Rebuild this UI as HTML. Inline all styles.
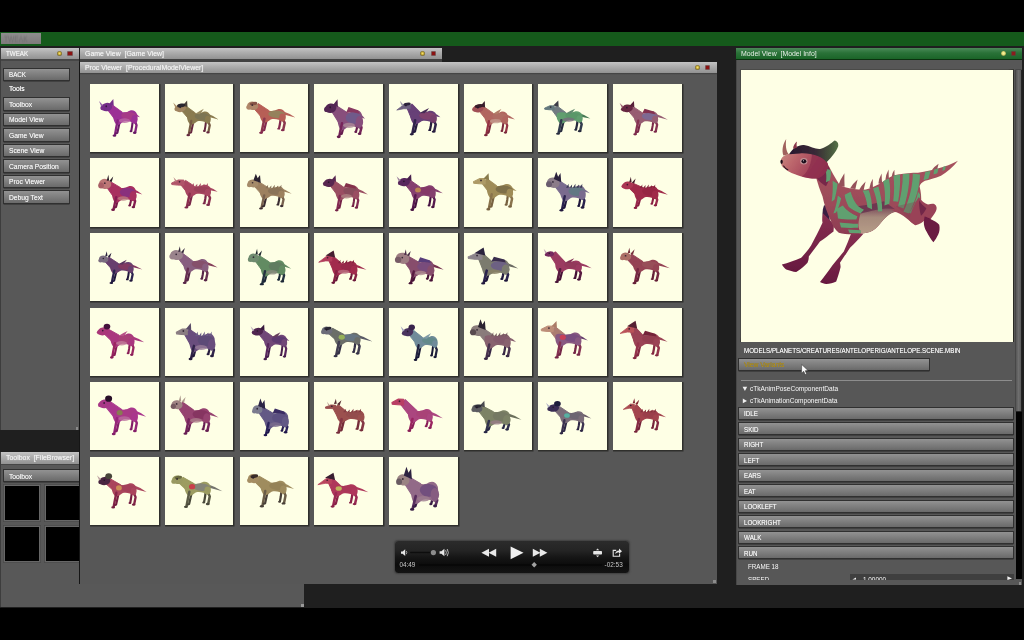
<!DOCTYPE html><html><head><meta charset="utf-8"><title>TWEAK</title><style>
html,body{margin:0;padding:0;background:#000;}
body{width:1024px;height:640px;overflow:hidden;position:relative;filter:blur(0.4px);font-family:"Liberation Sans",sans-serif;font-size:8px;color:#f8f8f8;}
div{position:absolute;box-sizing:border-box;}
svg{position:absolute;overflow:visible;}
.t{white-space:nowrap;line-height:10px;filter:blur(0.35px);transform-origin:0 0;}
#green{left:0;top:32px;width:1024px;height:13.5px;background:#155a1b;}
#work{left:0;top:45.5px;width:1024px;height:562px;background:#1f1f1f;}
#tab{left:1px;top:33px;width:40px;height:11px;background:linear-gradient(#8e8e8e,#7e7a7a);}
#tab .t{left:3px;top:1px;color:#6f6f6f;font-size:8.5px;filter:blur(0.8px);}
.hd{height:11px;background:linear-gradient(#c4c4c4,#aeaeae 40%,#929292);}
.hd .t{left:4.5px;top:0.5px;color:#f0f0f0;font-size:8px;text-shadow:0 0 1px #fffc;}
.hdg{height:11.5px;background:linear-gradient(#4b8a58,#2a7238 45%,#1b6428);border-bottom:1px solid #0b300f;}
.hdg .t{left:4.5px;top:0.5px;color:#e8f0e8;font-size:8px;}
.pb{background:#585858;}
.dot{width:5px;height:5px;border-radius:50%;background:radial-gradient(circle at 50% 48%,#f2e27a 0,#d4b83c 30%,#8a7830 58%,#5a5436 80%,#6a6a5a 100%);}
.dotg{width:4.6px;height:4.6px;border-radius:50%;background:radial-gradient(circle at 50% 45%,#fbf6a8 0,#e6e078 40%,#6a7a3a 80%,#2a5a2a 100%);}
.red{width:3.3px;height:3.5px;background:#8c1212;box-shadow:0 0 0 0.7px #6a3434;}
.btn{height:11.6px;background:linear-gradient(#929292,#7e7e7e 50%,#6a6a6a);box-shadow:0 0 0 1px #303030, 0 1.1px 0.6px 0.4px #2b2b2b;}
.btn .t{left:4.5px;top:1.8px;color:#f3f3f3;font-size:8px;text-shadow:0 0 0.6px #fffa;}
.cell{width:68.6px;height:68.4px;background:#feffe5;box-shadow:0.8px 0.8px 0 0.7px #2f2f2c;overflow:hidden;}
.blk{background:#000;box-shadow:0 0 0 1.2px #676767, 0 0 0 2px #4a4a4a;}
</style></head><body>
<svg width="0" height="0" style="left:0;top:0"><defs><filter id="sb" x="-20%" y="-20%" width="140%" height="140%"><feGaussianBlur stdDeviation="0.5"/><feColorMatrix type="saturate" values="0.86"/></filter><filter id="bb" x="-10%" y="-10%" width="120%" height="120%"><feGaussianBlur stdDeviation="0.72"/><feColorMatrix type="saturate" values="0.9"/></filter></defs></svg>
<div id="work"></div>
<div id="green"></div>
<div id="tab"><div class="t" style="transform:scaleX(0.78);">TWEAK</div></div>
<div class="pb" style="left:0;top:48px;width:78.6px;height:382px;border-left:1px solid #3d3d3d;background:#585858"></div>
<div class="hd" style="left:1px;top:48px;width:77.6px;"><div class="t" style="transform:scaleX(0.78);left:4.5px">TWEAK</div></div>
<div style="left:1px;top:59px;width:77.6px;height:1.6px;background:#464646"></div>
<div class="dot" style="left:57px;top:51.1px"></div><div class="red" style="left:68.3px;top:51.9px"></div>
<div style="left:75.6px;top:427px;width:2.6px;height:2.6px;background:#8a8a8a"></div>
<div class="btn" style="left:4px;top:68.7px;width:65.4px"><div class="t" style="transform:scaleX(0.78);">BACK</div></div>
<div class="btn" style="left:4px;top:98.0px;width:65.4px"><div class="t" style="transform:scaleX(0.84);">Toolbox</div></div>
<div class="btn" style="left:4px;top:113.5px;width:65.4px"><div class="t" style="transform:scaleX(0.84);">Model View</div></div>
<div class="btn" style="left:4px;top:129.0px;width:65.4px"><div class="t" style="transform:scaleX(0.84);">Game View</div></div>
<div class="btn" style="left:4px;top:144.5px;width:65.4px"><div class="t" style="transform:scaleX(0.84);">Scene View</div></div>
<div class="btn" style="left:4px;top:160.0px;width:65.4px"><div class="t" style="transform:scaleX(0.84);">Camera Position</div></div>
<div class="btn" style="left:4px;top:175.5px;width:65.4px"><div class="t" style="transform:scaleX(0.84);">Proc Viewer</div></div>
<div class="btn" style="left:4px;top:191.0px;width:65.4px"><div class="t" style="transform:scaleX(0.84);">Debug Text</div></div>
<div class="t" style="transform:scaleX(0.84);left:8.6px;top:84.2px;font-size:8px;color:#fbfbfb;text-shadow:0 0 0.7px #fffc">Tools</div>
<div class="pb" style="left:0;top:452px;width:304px;height:155.4px;border-left:1px solid #3d3d3d;"></div>
<div class="hd" style="left:1px;top:452.3px;width:303px;height:11.4px"><div class="t" style="transform:scaleX(0.865);left:4.5px">Toolbox&nbsp; [FileBrowser]</div></div>
<div style="left:1px;top:463.7px;width:303px;height:1.5px;background:#464646"></div>
<div style="left:301.2px;top:604px;width:2.6px;height:2.6px;background:#9a9a9a"></div>
<div class="btn" style="left:4px;top:469.8px;width:200px;height:11.2px"><div class="t" style="transform:scaleX(0.84);">Toolbox</div></div>
<div class="blk" style="left:5.2px;top:486.4px;width:34.2px;height:34px"></div>
<div class="blk" style="left:5.2px;top:527px;width:34.2px;height:34px"></div>
<div class="blk" style="left:46.2px;top:486.4px;width:34.2px;height:34px"></div>
<div class="blk" style="left:46.2px;top:527px;width:34.2px;height:34px"></div>
<div style="left:80px;top:48px;width:362px;height:16px;background:#424242"></div>
<div class="hd" style="left:80px;top:48px;width:362px;"><div class="t" style="transform:scaleX(0.865);">Game View&nbsp; [Game View]</div></div>
<div class="dot" style="left:420px;top:51.1px"></div><div class="red" style="left:431.6px;top:51.9px"></div>
<div style="left:78.8px;top:61.5px;width:638.4px;height:522.6px;background:#151515"></div>
<div style="left:80px;top:62px;width:636.6px;height:521.6px;background:#575757"></div>
<div class="hd" style="left:80px;top:62px;width:636.6px;"><div class="t" style="transform:scaleX(0.865);">Proc Viewer&nbsp; [ProceduralModelViewer]</div></div>
<div style="left:80px;top:73px;width:636.6px;height:2px;background:linear-gradient(#3f3f3f,#595959)"></div>
<div class="dot" style="left:694.8px;top:64.9px"></div><div class="red" style="left:706.1px;top:65.6px"></div>
<div style="left:713.4px;top:580.2px;width:2.8px;height:2.8px;background:#8c8c8c"></div>
<div class="cell" style="left:90.2px;top:83.7px"><svg width="68.6" height="68.4" viewBox="0 0 68.6 68.4" style="left:0;top:0"><g transform="matrix(0.9322 0 0 1.0023 1.713 0.008) translate(0 0)" filter="url(#sb)"><path d="M45,28.22 Q49.4,30.1 51.7,33.1 Q48.9,32.42 45,31.64 Z" fill="#a3239b"/><polyline points="30.2,37 28.8,43.25 27.6,48.5" fill="none" stroke="#6a0a68" stroke-width="2.25" stroke-linecap="round" stroke-linejoin="round"/><polyline points="44,37 43.3,42.25 42.5,46.5" fill="none" stroke="#6a0a68" stroke-width="2.25" stroke-linecap="round" stroke-linejoin="round"/><path d="M17,25.6 L21.6,20.6 L32.5,28 L29,36 L23.8,33.9 Z" fill="#a3239b" stroke="#a3239b" stroke-width="1" stroke-linejoin="round"/><path d="M23.5,28.4 C27.5,25.9 33.1,29.4 38.1,27.9 C42.1,25.4 46.7,25.4 48.7,30.4 C49.5,33.9 48.7,37.7 46.2,39.7 C42.7,37.7 38.1,36.2 34.1,37.5 C31.1,39.7 28.5,41.7 26.5,40.7 C23,36.7 22.5,31.9 23.5,28.4 Z" fill="#a3239b"/><ellipse cx="40.1" cy="31.86" rx="8.5" ry="4.01" transform="rotate(4 40.1 31.86)" fill="#b0308a" opacity="0.85"/><ellipse cx="35.1" cy="36.5" rx="6" ry="2.3" fill="#c060a8" opacity="0.8"/><polyline points="27.8,36.5 26.2,44.25 25,50.7" fill="none" stroke="#8a1284" stroke-width="2.5" stroke-linecap="round" stroke-linejoin="round"/><ellipse cx="24.4" cy="51.5" rx="2.0" ry="1.2" fill="#6a0a68"/><polyline points="45.7,35.5 48.1,41.05 46.7,47.8" fill="none" stroke="#8a1284" stroke-width="2.5" stroke-linecap="round" stroke-linejoin="round"/><ellipse cx="46.1" cy="48.7" rx="1.9" ry="1.2" fill="#6a0a68"/><ellipse cx="26.4" cy="49.1" rx="1.5" ry="1.0" fill="#6a0a68"/><ellipse cx="42.1" cy="47.1" rx="1.5" ry="1.0" fill="#6a0a68"/><ellipse cx="45.9" cy="35.2" rx="3.29" ry="4.24" fill="#a3239b"/><ellipse cx="16" cy="23" rx="6" ry="4.2" transform="rotate(-8 16 23)" fill="#7a2590"/><ellipse cx="11.8" cy="24" rx="2.6" ry="2.3" fill="#7a2590"/><path d="M18.2,20.4 L23.2,15 L23.6,21.8 Z" fill="#7a2590"/><path d="M10.2,22.4 L7.8,17 L12.2,21.2 Z" fill="#9a60b0"/><circle cx="15.6" cy="22.2" r="0.9" fill="#221428" opacity="0.8"/></g></svg></div>
<div class="cell" style="left:164.9px;top:83.7px"><svg width="68.6" height="68.4" viewBox="0 0 68.6 68.4" style="left:0;top:0"><g transform="matrix(0.9088 0 0 0.9483 1.043 2.299) translate(0 0)" filter="url(#sb)"><path d="M45,28.37 Q52.1,30.85 57.7,35.05 Q51.6,33.53 45,31.79 Z" fill="#8c7a44"/><polyline points="30.2,37 28.8,43.25 27.6,48.5" fill="none" stroke="#6a2440" stroke-width="2.25" stroke-linecap="round" stroke-linejoin="round"/><polyline points="44,37 43.3,42.25 42.5,46.5" fill="none" stroke="#6a2440" stroke-width="2.25" stroke-linecap="round" stroke-linejoin="round"/><path d="M17,25.6 L21.6,20.6 L32.5,28.3 L29,36 L24.28,33.7 Z" fill="#8c7a44" stroke="#8c7a44" stroke-width="1" stroke-linejoin="round"/><path d="M23.5,28.7 C27.5,26.2 33.1,29.7 38.1,28.2 C42.1,25.7 46.7,25.7 48.7,30.7 C49.5,34.2 48.7,37.35 46.2,39.35 C42.7,37.35 38.1,35.85 34.1,37.15 C31.1,39.35 28.5,41.35 26.5,40.35 C23,36.35 22.5,32.2 23.5,28.7 Z" fill="#8c7a44"/><ellipse cx="40.1" cy="31.88" rx="8.5" ry="3.79" transform="rotate(4 40.1 31.88)" fill="#7a7450" opacity="0.85"/><path d="M32.1,29 L37.1,26 L41.6,23.8 L39.1,27.4 L37.1,29.4 Z" fill="#9a8a58"/><polyline points="27.8,36.5 26.2,44.25 25,50.7" fill="none" stroke="#7a5a3c" stroke-width="2.5" stroke-linecap="round" stroke-linejoin="round"/><ellipse cx="24.4" cy="51.5" rx="2.0" ry="1.2" fill="#6a2440"/><polyline points="45.7,35.5 48.1,41.05 46.7,47.8" fill="none" stroke="#7a5a3c" stroke-width="2.5" stroke-linecap="round" stroke-linejoin="round"/><ellipse cx="46.1" cy="48.7" rx="1.9" ry="1.2" fill="#6a2440"/><ellipse cx="26.4" cy="49.1" rx="1.5" ry="1.0" fill="#6a2440"/><ellipse cx="42.1" cy="47.1" rx="1.5" ry="1.0" fill="#6a2440"/><ellipse cx="45.9" cy="35.2" rx="3.15" ry="4.02" fill="#8c7a44"/><ellipse cx="16" cy="23" rx="6" ry="4.2" transform="rotate(-8 16 23)" fill="#a58356"/><ellipse cx="11.8" cy="24" rx="2.6" ry="2.3" fill="#a58356"/><path d="M18.2,20.4 L23.2,15 L23.6,21.8 Z" fill="#4a4038"/><ellipse cx="17.2" cy="20.4" rx="4.6" ry="2" transform="rotate(-10 16 23)" fill="#2c2630"/><path d="M10.2,22.4 L7.8,17 L12.2,21.2 Z" fill="#b09060"/><circle cx="15.6" cy="22.2" r="0.9" fill="#221428" opacity="0.8"/></g></svg></div>
<div class="cell" style="left:239.6px;top:83.7px"><svg width="68.6" height="68.4" viewBox="0 0 68.6 68.4" style="left:0;top:0"><g transform="matrix(0.9985 0 0 0.9459 -1.321 0.084) translate(-2 0)" filter="url(#sb)"><path d="M45,28.3 Q52.55,30.88 58.7,35.28 Q52.05,33.61 45,31.71 Z" fill="#bf5a50"/><polyline points="30.2,37 28.8,43.25 27.6,48.5" fill="none" stroke="#8a2450" stroke-width="2.25" stroke-linecap="round" stroke-linejoin="round"/><polyline points="44,37 43.3,42.25 42.5,46.5" fill="none" stroke="#8a2450" stroke-width="2.25" stroke-linecap="round" stroke-linejoin="round"/><path d="M17,25.6 L21.6,20.6 L32.5,28.15 L29,36 L23.8,33.8 Z" fill="#bf5a50" stroke="#bf5a50" stroke-width="1" stroke-linejoin="round"/><path d="M23.5,28.55 C27.5,26.05 33.1,29.55 38.1,28.05 C42.1,25.55 46.7,25.55 48.7,30.55 C49.5,34.05 48.7,37.52 46.2,39.52 C42.7,37.52 38.1,36.02 34.1,37.32 C31.1,39.52 28.5,41.52 26.5,40.52 C23,36.52 22.5,32.05 23.5,28.55 Z" fill="#bf5a50"/><ellipse cx="40.1" cy="31.87" rx="8.5" ry="3.9" transform="rotate(4 40.1 31.87)" fill="#8f8852" opacity="0.85"/><polyline points="27.8,36.5 26.2,44.25 25,50.7" fill="none" stroke="#93304e" stroke-width="2.5" stroke-linecap="round" stroke-linejoin="round"/><ellipse cx="24.4" cy="51.5" rx="2.0" ry="1.2" fill="#8a2450"/><polyline points="45.7,35.5 48.1,41.05 46.7,47.8" fill="none" stroke="#93304e" stroke-width="2.5" stroke-linecap="round" stroke-linejoin="round"/><ellipse cx="46.1" cy="48.7" rx="1.9" ry="1.2" fill="#8a2450"/><ellipse cx="26.4" cy="49.1" rx="1.5" ry="1.0" fill="#8a2450"/><ellipse cx="42.1" cy="47.1" rx="1.5" ry="1.0" fill="#8a2450"/><ellipse cx="45.9" cy="35.2" rx="3.22" ry="4.13" fill="#bf5a50"/><ellipse cx="16" cy="23" rx="5.61" ry="4.42" transform="rotate(10 16 23)" fill="#b58562"/><ellipse cx="12.26" cy="24.6" rx="2.63" ry="2.55" fill="#b58562"/><ellipse cx="17.2" cy="20.79" rx="3.91" ry="1.7" transform="rotate(-10 16 23)" fill="#8a5040"/><circle cx="15.6" cy="22.2" r="0.9" fill="#221428" opacity="0.8"/></g></svg></div>
<div class="cell" style="left:314.3px;top:83.7px"><svg width="68.6" height="68.4" viewBox="0 0 68.6 68.4" style="left:0;top:0"><g transform="matrix(0.9626 0 0 1.1217 1.216 -1.525) translate(0 0)" filter="url(#sb)"><path d="M45,27.47 Q49.4,29.35 51.7,32.35 Q48.9,31.67 45,30.89 Z" fill="#8d4b80"/><polyline points="30.2,37 28.8,41.75 27.6,45.5" fill="none" stroke="#6a1450" stroke-width="2.25" stroke-linecap="round" stroke-linejoin="round"/><polyline points="44,37 43.3,40.75 42.5,43.5" fill="none" stroke="#6a1450" stroke-width="2.25" stroke-linecap="round" stroke-linejoin="round"/><path d="M17,25.6 L21.6,20.6 L32.5,26.5 L29,36 L23.8,34.9 Z" fill="#8d4b80" stroke="#8d4b80" stroke-width="1" stroke-linejoin="round"/><path d="M23.5,26.9 C27.5,24.4 33.1,27.9 38.1,26.4 C42.1,23.9 46.7,23.9 48.7,28.9 C49.5,32.4 48.7,39.45 46.2,41.45 C42.7,39.45 38.1,37.95 34.1,39.25 C31.1,41.45 28.5,43.45 26.5,42.45 C23,38.45 22.5,30.4 23.5,26.9 Z" fill="#8d4b80"/><ellipse cx="40.1" cy="31.72" rx="8.5" ry="5.12" transform="rotate(4 40.1 31.72)" fill="#6d5c92" opacity="0.85"/><ellipse cx="35.1" cy="38.25" rx="6" ry="2.3" fill="#b08a98" opacity="0.8"/><path d="M32.1,26.9 L34.6,21.8 L44.6,24.8 L46.1,27.8 L39.1,26.6 Z" fill="#8d3162"/><polyline points="27.8,36.5 26.2,42.75 25,47.7" fill="none" stroke="#7c1c5c" stroke-width="2.5" stroke-linecap="round" stroke-linejoin="round"/><ellipse cx="24.4" cy="48.5" rx="2.0" ry="1.2" fill="#6a1450"/><polyline points="45.7,35.5 48.1,40.15 46.7,44.8" fill="none" stroke="#7c1c5c" stroke-width="2.5" stroke-linecap="round" stroke-linejoin="round"/><ellipse cx="46.1" cy="45.7" rx="1.9" ry="1.2" fill="#6a1450"/><ellipse cx="26.4" cy="46.1" rx="1.5" ry="1.0" fill="#6a1450"/><ellipse cx="42.1" cy="44.1" rx="1.5" ry="1.0" fill="#6a1450"/><ellipse cx="45.9" cy="35.2" rx="3.91" ry="5.22" fill="#8d4b80"/><ellipse cx="16" cy="23" rx="6" ry="4.2" transform="rotate(-8 16 23)" fill="#572258"/><ellipse cx="11.8" cy="24" rx="2.6" ry="2.3" fill="#572258"/><path d="M18.2,20.4 L23.2,15 L23.6,21.8 Z" fill="#572258"/><circle cx="15.6" cy="22.2" r="0.9" fill="#221428" opacity="0.8"/></g></svg></div>
<div class="cell" style="left:389.0px;top:83.7px"><svg width="68.6" height="68.4" viewBox="0 0 68.6 68.4" style="left:0;top:0"><g transform="matrix(1.0121 0 0 0.9343 -1.976 2.164) translate(0 0)" filter="url(#sb)"><path d="M45,28.22 Q49.85,30.2 52.7,33.4 Q49.35,32.58 45,31.64 Z" fill="#6a3c7c"/><polyline points="30.2,37 28.8,43.25 27.6,48.5" fill="none" stroke="#251a40" stroke-width="2.25" stroke-linecap="round" stroke-linejoin="round"/><polyline points="44,37 43.3,42.25 42.5,46.5" fill="none" stroke="#251a40" stroke-width="2.25" stroke-linecap="round" stroke-linejoin="round"/><path d="M20,24.1 L24.6,19.1 L32.5,28 L29,36 L23.8,33.9 Z" fill="#6a3c7c" stroke="#6a3c7c" stroke-width="1" stroke-linejoin="round"/><path d="M23.5,28.4 C27.5,25.9 33.1,29.4 38.1,27.9 C42.1,25.4 46.7,25.4 48.7,30.4 C49.5,33.9 48.7,37.7 46.2,39.7 C42.7,37.7 38.1,36.2 34.1,37.5 C31.1,39.7 28.5,41.7 26.5,40.7 C23,36.7 22.5,31.9 23.5,28.4 Z" fill="#6a3c7c"/><ellipse cx="40.1" cy="31.86" rx="8.5" ry="4.01" transform="rotate(4 40.1 31.86)" fill="#8a3c6e" opacity="0.85"/><path d="M32.1,28.7 L37.1,25.7 L41.6,23.5 L39.1,27.1 L37.1,29.1 Z" fill="#4a2a5a"/><polyline points="27.8,36.5 26.2,44.25 25,50.7" fill="none" stroke="#33224f" stroke-width="2.5" stroke-linecap="round" stroke-linejoin="round"/><ellipse cx="24.4" cy="51.5" rx="2.0" ry="1.2" fill="#251a40"/><polyline points="45.7,35.5 48.1,41.05 46.7,47.8" fill="none" stroke="#33224f" stroke-width="2.5" stroke-linecap="round" stroke-linejoin="round"/><ellipse cx="46.1" cy="48.7" rx="1.9" ry="1.2" fill="#251a40"/><ellipse cx="26.4" cy="49.1" rx="1.5" ry="1.0" fill="#251a40"/><ellipse cx="42.1" cy="47.1" rx="1.5" ry="1.0" fill="#251a40"/><ellipse cx="45.9" cy="35.2" rx="3.29" ry="4.24" fill="#7a3a70"/><path d="M22.9,19 L18.22,18.54 L9.64,25.56 L16.66,24.15 L22.9,24.31 Z" fill="#6e5e84" stroke="#6e5e84" stroke-width="0.8" stroke-linejoin="round"/><ellipse cx="20.2" cy="19.47" rx="3.59" ry="1.56" transform="rotate(-10 19 21.5)" fill="#2e2440"/><path d="M14.48,20.9 L12.6,15.5 L16.04,19.7 Z" fill="#9a94aa"/><circle cx="18.6" cy="20.7" r="0.9" fill="#221428" opacity="0.8"/></g></svg></div>
<div class="cell" style="left:463.6px;top:83.7px"><svg width="68.6" height="68.4" viewBox="0 0 68.6 68.4" style="left:0;top:0"><g transform="matrix(0.9033 0 0 0.9329 -0.665 2.188) translate(0.5 1)" filter="url(#sb)"><path d="M45,28.22 Q51.65,30.6 56.7,34.6 Q51.15,33.22 45,31.64 Z" fill="#b8625a"/><polyline points="30.2,37 28.8,43.25 27.6,48.5" fill="none" stroke="#80203a" stroke-width="2.25" stroke-linecap="round" stroke-linejoin="round"/><polyline points="44,37 43.3,42.25 42.5,46.5" fill="none" stroke="#80203a" stroke-width="2.25" stroke-linecap="round" stroke-linejoin="round"/><path d="M17,25.6 L21.6,20.6 L32.5,28 L29,36 L23.8,33.9 Z" fill="#b8625a" stroke="#b8625a" stroke-width="1" stroke-linejoin="round"/><path d="M23.5,28.4 C27.5,25.9 33.1,29.4 38.1,27.9 C42.1,25.4 46.7,25.4 48.7,30.4 C49.5,33.9 48.7,37.7 46.2,39.7 C42.7,37.7 38.1,36.2 34.1,37.5 C31.1,39.7 28.5,41.7 26.5,40.7 C23,36.7 22.5,31.9 23.5,28.4 Z" fill="#b8625a"/><ellipse cx="40.1" cy="31.86" rx="8.5" ry="4.01" transform="rotate(4 40.1 31.86)" fill="#b46c5e" opacity="0.85"/><ellipse cx="35.1" cy="36.5" rx="6" ry="2.3" fill="#c8988a" opacity="0.8"/><path d="M32.1,28.7 L37.1,25.7 L41.6,23.5 L39.1,27.1 L37.1,29.1 Z" fill="#b87a60"/><polyline points="27.8,36.5 26.2,44.25 25,50.7" fill="none" stroke="#9c2c42" stroke-width="2.5" stroke-linecap="round" stroke-linejoin="round"/><ellipse cx="24.4" cy="51.5" rx="2.0" ry="1.2" fill="#80203a"/><polyline points="45.7,35.5 48.1,41.05 46.7,47.8" fill="none" stroke="#9c2c42" stroke-width="2.5" stroke-linecap="round" stroke-linejoin="round"/><ellipse cx="46.1" cy="48.7" rx="1.9" ry="1.2" fill="#80203a"/><ellipse cx="26.4" cy="49.1" rx="1.5" ry="1.0" fill="#80203a"/><ellipse cx="42.1" cy="47.1" rx="1.5" ry="1.0" fill="#80203a"/><ellipse cx="45.9" cy="35.2" rx="3.29" ry="4.24" fill="#b8625a"/><ellipse cx="16" cy="23" rx="6" ry="4.2" transform="rotate(-8 16 23)" fill="#a84c52"/><ellipse cx="11.8" cy="24" rx="2.6" ry="2.3" fill="#a84c52"/><path d="M18.2,20.4 L23.2,15 L23.6,21.8 Z" fill="#3a1a2c"/><ellipse cx="17.2" cy="20.4" rx="4.6" ry="2" transform="rotate(-10 16 23)" fill="#3a1a2c"/><circle cx="15.6" cy="22.2" r="0.9" fill="#221428" opacity="0.8"/></g></svg></div>
<div class="cell" style="left:538.3px;top:83.7px"><svg width="68.6" height="68.4" viewBox="0 0 68.6 68.4" style="left:0;top:0"><g transform="matrix(0.9999 0 0 0.9097 -4.917 2.889) translate(0.5 0)" filter="url(#sb)"><path d="M45,28.45 Q51.65,30.83 56.7,34.83 Q51.15,33.45 45,31.87 Z" fill="#3e7a50"/><polyline points="30.2,37 28.8,43.25 27.6,48.5" fill="none" stroke="#262a40" stroke-width="2.25" stroke-linecap="round" stroke-linejoin="round"/><polyline points="44,37 43.3,42.25 42.5,46.5" fill="none" stroke="#262a40" stroke-width="2.25" stroke-linecap="round" stroke-linejoin="round"/><path d="M18.5,25.6 L23.1,20.6 L32.5,28.45 L29,36 L23.8,33.6 Z" fill="#6f7a82" stroke="#6f7a82" stroke-width="1" stroke-linejoin="round"/><path d="M23.5,28.85 C27.5,26.35 33.1,29.85 38.1,28.35 C42.1,25.85 46.7,25.85 48.7,30.85 C49.5,34.35 48.7,37.17 46.2,39.17 C42.7,37.17 38.1,35.67 34.1,36.97 C31.1,39.17 28.5,41.17 26.5,40.17 C23,36.17 22.5,32.35 23.5,28.85 Z" fill="#56a068"/><ellipse cx="40.1" cy="31.9" rx="8.5" ry="3.68" transform="rotate(4 40.1 31.9)" fill="#4e9862" opacity="0.85"/><ellipse cx="35.1" cy="35.97" rx="6" ry="2.3" fill="#7a6a80" opacity="0.8"/><path d="M32.1,29.15 L37.1,26.15 L41.6,23.95 L39.1,27.55 L37.1,29.55 Z" fill="#5a8a6a"/><polyline points="27.8,36.5 26.2,44.25 25,50.7" fill="none" stroke="#313b51" stroke-width="2.5" stroke-linecap="round" stroke-linejoin="round"/><ellipse cx="24.4" cy="51.5" rx="2.0" ry="1.2" fill="#262a40"/><polyline points="45.7,35.5 48.1,41.05 46.7,47.8" fill="none" stroke="#313b51" stroke-width="2.5" stroke-linecap="round" stroke-linejoin="round"/><ellipse cx="46.1" cy="48.7" rx="1.9" ry="1.2" fill="#262a40"/><ellipse cx="26.4" cy="49.1" rx="1.5" ry="1.0" fill="#262a40"/><ellipse cx="42.1" cy="47.1" rx="1.5" ry="1.0" fill="#262a40"/><ellipse cx="45.9" cy="35.2" rx="3.07" ry="3.91" fill="#56a068"/><path d="M20.6,20.89 L16.26,20.77 L10.99,23.37 L11.18,24.61 L15.64,25.11 L20.6,25.23 Z" fill="#61797f" stroke="#61797f" stroke-width="1" stroke-linejoin="round"/><path d="M19.7,20.4 L24.7,15 L25.1,21.8 Z" fill="#3a3a48"/><circle cx="17.1" cy="22.2" r="0.9" fill="#221428" opacity="0.8"/></g></svg></div>
<div class="cell" style="left:613.0px;top:83.7px"><svg width="68.6" height="68.4" viewBox="0 0 68.6 68.4" style="left:0;top:0"><g transform="matrix(0.9296 0 0 0.9097 -1.062 3.475) translate(0.5 0)" filter="url(#sb)"><path d="M45,28.22 Q53,30.9 59.7,35.5 Q52.5,33.7 45,31.64 Z" fill="#9c5a72"/><polyline points="30.2,37 28.8,43.25 27.6,48.5" fill="none" stroke="#80204a" stroke-width="2.25" stroke-linecap="round" stroke-linejoin="round"/><polyline points="44,37 43.3,42.25 42.5,46.5" fill="none" stroke="#80204a" stroke-width="2.25" stroke-linecap="round" stroke-linejoin="round"/><path d="M17,25.6 L21.6,20.6 L32.5,28 L29,36 L23.8,33.9 Z" fill="#9c5a72" stroke="#9c5a72" stroke-width="1" stroke-linejoin="round"/><path d="M23.5,28.4 C27.5,25.9 33.1,29.4 38.1,27.9 C42.1,25.4 46.7,25.4 48.7,30.4 C49.5,33.9 48.7,37.7 46.2,39.7 C42.7,37.7 38.1,36.2 34.1,37.5 C31.1,39.7 28.5,41.7 26.5,40.7 C23,36.7 22.5,31.9 23.5,28.4 Z" fill="#9c5a72"/><ellipse cx="40.1" cy="31.86" rx="8.5" ry="4.01" transform="rotate(4 40.1 31.86)" fill="#7b6a9c" opacity="0.85"/><path d="M32.1,28.4 L34.6,23.3 L44.6,26.3 L46.1,29.3 L39.1,28.1 Z" fill="#8a2a50"/><polyline points="27.8,36.5 26.2,44.25 25,50.7" fill="none" stroke="#8c2a52" stroke-width="2.5" stroke-linecap="round" stroke-linejoin="round"/><ellipse cx="24.4" cy="51.5" rx="2.0" ry="1.2" fill="#80204a"/><polyline points="45.7,35.5 48.1,41.05 46.7,47.8" fill="none" stroke="#8c2a52" stroke-width="2.5" stroke-linecap="round" stroke-linejoin="round"/><ellipse cx="46.1" cy="48.7" rx="1.9" ry="1.2" fill="#80204a"/><ellipse cx="26.4" cy="49.1" rx="1.5" ry="1.0" fill="#80204a"/><ellipse cx="42.1" cy="47.1" rx="1.5" ry="1.0" fill="#80204a"/><ellipse cx="45.9" cy="35.2" rx="3.29" ry="4.24" fill="#9c5a72"/><ellipse cx="16" cy="23" rx="6" ry="4.2" transform="rotate(-8 16 23)" fill="#6c2242"/><ellipse cx="11.8" cy="24" rx="2.6" ry="2.3" fill="#6c2242"/><path d="M18.2,20.4 L23.2,15 L23.6,21.8 Z" fill="#5a1a38"/><path d="M10.2,22.4 L7.8,17 L12.2,21.2 Z" fill="#a05a70"/><circle cx="15.6" cy="22.2" r="0.9" fill="#221428" opacity="0.8"/></g></svg></div>
<div class="cell" style="left:90.2px;top:158.3px"><svg width="68.6" height="68.4" viewBox="0 0 68.6 68.4" style="left:0;top:0"><g transform="matrix(0.9350 0 0 0.9739 1.161 2.598) translate(-1 1)" filter="url(#sb)"><path d="M45,27.62 Q51.2,29.9 55.7,33.7 Q50.7,32.46 45,31.04 Z" fill="#b0205f"/><polyline points="30.2,37 28.8,42.25 27.6,46.5" fill="none" stroke="#7a0a48" stroke-width="2.25" stroke-linecap="round" stroke-linejoin="round"/><polyline points="44,37 43.3,41.25 42.5,44.5" fill="none" stroke="#7a0a48" stroke-width="2.25" stroke-linecap="round" stroke-linejoin="round"/><path d="M17,25.6 L21.6,20.6 L32.5,26.8 L29,36 L23.8,34.7 Z" fill="#b0205f" stroke="#b0205f" stroke-width="1" stroke-linejoin="round"/><path d="M23.5,27.2 C27.5,24.7 33.1,28.2 38.1,26.7 C42.1,24.2 46.7,24.2 48.7,29.2 C49.5,32.7 48.7,39.1 46.2,41.1 C42.7,39.1 38.1,37.6 34.1,38.9 C31.1,41.1 28.5,43.1 26.5,42.1 C23,38.1 22.5,30.7 23.5,27.2 Z" fill="#b0205f"/><ellipse cx="40.1" cy="31.75" rx="8.5" ry="4.9" transform="rotate(4 40.1 31.75)" fill="#8a2a88" opacity="0.85"/><ellipse cx="35.1" cy="37.9" rx="6" ry="2.3" fill="#c07a80" opacity="0.8"/><polyline points="27.8,36.5 26.2,43.25 25,48.7" fill="none" stroke="#8c1052" stroke-width="2.5" stroke-linecap="round" stroke-linejoin="round"/><ellipse cx="24.4" cy="49.5" rx="2.0" ry="1.2" fill="#7a0a48"/><polyline points="45.7,35.5 48.1,40.45 46.7,45.8" fill="none" stroke="#8c1052" stroke-width="2.5" stroke-linecap="round" stroke-linejoin="round"/><ellipse cx="46.1" cy="46.7" rx="1.9" ry="1.2" fill="#7a0a48"/><ellipse cx="26.4" cy="47.1" rx="1.5" ry="1.0" fill="#7a0a48"/><ellipse cx="42.1" cy="45.1" rx="1.5" ry="1.0" fill="#7a0a48"/><ellipse cx="45.9" cy="35.2" rx="3.79" ry="5.04" fill="#b0205f"/><ellipse cx="16" cy="23" rx="6.6" ry="5.2" transform="rotate(10 16 23)" fill="#c27272"/><ellipse cx="11.6" cy="24.6" rx="3.1" ry="3" fill="#b05a64"/><path d="M17.6,19.6 L19.4,13.6 L20.2,19.4 Z M20.4,20 L24.6,15.4 L23,21 Z" fill="#2a1a28"/><circle cx="15.6" cy="22.2" r="0.9" fill="#221428" opacity="0.8"/></g></svg></div>
<div class="cell" style="left:164.9px;top:158.3px"><svg width="68.6" height="68.4" viewBox="0 0 68.6 68.4" style="left:0;top:0"><g transform="matrix(0.9999 0 0 0.9220 -2.038 1.095) translate(-1 1)" filter="url(#sb)"><path d="M45,28.45 Q51.2,30.73 55.7,34.52 Q50.7,33.29 45,31.87 Z" fill="#b04060"/><polyline points="30.2,37 28.8,43.25 27.6,48.5" fill="none" stroke="#80204a" stroke-width="2.25" stroke-linecap="round" stroke-linejoin="round"/><polyline points="44,37 43.3,42.25 42.5,46.5" fill="none" stroke="#80204a" stroke-width="2.25" stroke-linecap="round" stroke-linejoin="round"/><path d="M19,27.1 L23.6,22.1 L32.5,28.45 L29,36 L23.8,33.6 Z" fill="#b04060" stroke="#b04060" stroke-width="1" stroke-linejoin="round"/><path d="M23.5,28.85 C27.5,26.35 33.1,29.85 38.1,28.35 C42.1,25.85 46.7,25.85 48.7,30.85 C49.5,34.35 48.7,37.17 46.2,39.17 C42.7,37.17 38.1,35.67 34.1,36.97 C31.1,39.17 28.5,41.17 26.5,40.17 C23,36.17 22.5,32.35 23.5,28.85 Z" fill="#b04060"/><ellipse cx="40.1" cy="31.9" rx="8.5" ry="3.68" transform="rotate(4 40.1 31.9)" fill="#a03a58" opacity="0.85"/><path d="M29.1,28.95 L31.9,24.95 L31.7,28.95 Z M32.6,28.95 L35.4,25.75 L35.2,28.95 Z M36.1,28.95 L38.9,24.95 L38.7,28.95 Z M39.6,28.95 L42.4,25.75 L42.2,28.95 Z M43.1,28.95 L45.9,24.95 L45.7,28.95 Z " fill="#b04060"/><polyline points="27.8,36.5 26.2,44.25 25,50.7" fill="none" stroke="#93284e" stroke-width="2.5" stroke-linecap="round" stroke-linejoin="round"/><ellipse cx="24.4" cy="51.5" rx="2.0" ry="1.2" fill="#80204a"/><polyline points="45.7,35.5 48.1,41.05 46.7,47.8" fill="none" stroke="#93284e" stroke-width="2.5" stroke-linecap="round" stroke-linejoin="round"/><ellipse cx="46.1" cy="48.7" rx="1.9" ry="1.2" fill="#80204a"/><ellipse cx="26.4" cy="49.1" rx="1.5" ry="1.0" fill="#80204a"/><ellipse cx="42.1" cy="47.1" rx="1.5" ry="1.0" fill="#80204a"/><ellipse cx="45.9" cy="35.2" rx="3.07" ry="3.91" fill="#b04060"/><path d="M22,21.78 L16.4,21.62 L9.6,24.98 L9.84,26.58 L15.6,27.22 L22,27.38 Z" fill="#b85068" stroke="#b85068" stroke-width="1" stroke-linejoin="round"/><path d="M13.36,23.9 L11.44,18.5 L14.96,22.7 Z" fill="#c08080"/><circle cx="17.6" cy="23.7" r="0.9" fill="#221428" opacity="0.8"/></g></svg></div>
<div class="cell" style="left:239.6px;top:158.3px"><svg width="68.6" height="68.4" viewBox="0 0 68.6 68.4" style="left:0;top:0"><g transform="matrix(0.9537 0 0 0.8789 -1.357 4.874) translate(-1 0.5)" filter="url(#sb)"><path d="M45,28.22 Q51.65,30.6 56.7,34.6 Q51.15,33.22 45,31.64 Z" fill="#a08058"/><polyline points="30.2,37 28.8,43.25 27.6,48.5" fill="none" stroke="#3a2a30" stroke-width="2.25" stroke-linecap="round" stroke-linejoin="round"/><polyline points="44,37 43.3,42.25 42.5,46.5" fill="none" stroke="#3a2a30" stroke-width="2.25" stroke-linecap="round" stroke-linejoin="round"/><path d="M17,25.6 L21.6,20.6 L32.5,28 L29,36 L23.8,33.9 Z" fill="#a08058" stroke="#a08058" stroke-width="1" stroke-linejoin="round"/><path d="M23.5,28.4 C27.5,25.9 33.1,29.4 38.1,27.9 C42.1,25.4 46.7,25.4 48.7,30.4 C49.5,33.9 48.7,37.7 46.2,39.7 C42.7,37.7 38.1,36.2 34.1,37.5 C31.1,39.7 28.5,41.7 26.5,40.7 C23,36.7 22.5,31.9 23.5,28.4 Z" fill="#a08058"/><ellipse cx="40.1" cy="31.86" rx="8.5" ry="4.01" transform="rotate(4 40.1 31.86)" fill="#8a7050" opacity="0.85"/><path d="M29.1,28.5 L31.9,24.5 L31.7,28.5 Z M32.6,28.5 L35.4,25.3 L35.2,28.5 Z M36.1,28.5 L38.9,24.5 L38.7,28.5 Z M39.6,28.5 L42.4,25.3 L42.2,28.5 Z M43.1,28.5 L45.9,24.5 L45.7,28.5 Z " fill="#8a7050"/><polyline points="27.8,36.5 26.2,44.25 25,50.7" fill="none" stroke="#7a6048" stroke-width="2.5" stroke-linecap="round" stroke-linejoin="round"/><ellipse cx="24.4" cy="51.5" rx="2.0" ry="1.2" fill="#3a2a30"/><polyline points="45.7,35.5 48.1,41.05 46.7,47.8" fill="none" stroke="#7a6048" stroke-width="2.5" stroke-linecap="round" stroke-linejoin="round"/><ellipse cx="46.1" cy="48.7" rx="1.9" ry="1.2" fill="#3a2a30"/><ellipse cx="26.4" cy="49.1" rx="1.5" ry="1.0" fill="#3a2a30"/><ellipse cx="42.1" cy="47.1" rx="1.5" ry="1.0" fill="#3a2a30"/><ellipse cx="45.9" cy="35.2" rx="3.29" ry="4.24" fill="#a08058"/><ellipse cx="16" cy="23" rx="5.61" ry="4.42" transform="rotate(10 16 23)" fill="#a88a62"/><ellipse cx="12.26" cy="24.6" rx="2.63" ry="2.55" fill="#a88a62"/><path d="M16.5,19.4 L19,12 L21,17 L23.4,13.4 L24.2,22.4 Z" fill="#2a2030"/><circle cx="15.6" cy="22.2" r="0.9" fill="#221428" opacity="0.8"/></g></svg></div>
<div class="cell" style="left:314.3px;top:158.3px"><svg width="68.6" height="68.4" viewBox="0 0 68.6 68.4" style="left:0;top:0"><g transform="matrix(0.9088 0 0 0.9637 0.512 1.785) translate(0 1)" filter="url(#sb)"><path d="M45,28.07 Q52.55,30.65 58.7,35.05 Q52.05,33.39 45,31.49 Z" fill="#a04a62"/><polyline points="30.2,37 28.8,43.25 27.6,48.5" fill="none" stroke="#7a1a48" stroke-width="2.25" stroke-linecap="round" stroke-linejoin="round"/><polyline points="44,37 43.3,42.25 42.5,46.5" fill="none" stroke="#7a1a48" stroke-width="2.25" stroke-linecap="round" stroke-linejoin="round"/><path d="M17,25.6 L21.6,20.6 L32.5,27.7 L29,36 L23.8,34.1 Z" fill="#a04a62" stroke="#a04a62" stroke-width="1" stroke-linejoin="round"/><path d="M23.5,28.1 C27.5,25.6 33.1,29.1 38.1,27.6 C42.1,25.1 46.7,25.1 48.7,30.1 C49.5,33.6 48.7,38.05 46.2,40.05 C42.7,38.05 38.1,36.55 34.1,37.85 C31.1,40.05 28.5,42.05 26.5,41.05 C23,37.05 22.5,31.6 23.5,28.1 Z" fill="#a04a62"/><ellipse cx="40.1" cy="31.83" rx="8.5" ry="4.23" transform="rotate(4 40.1 31.83)" fill="#8a4a5a" opacity="0.85"/><ellipse cx="35.1" cy="36.85" rx="6" ry="2.3" fill="#b08080" opacity="0.8"/><path d="M32.1,28.1 L34.6,23 L44.6,26 L46.1,29 L39.1,27.8 Z" fill="#8a2a4a"/><polyline points="27.8,36.5 26.2,44.25 25,50.7" fill="none" stroke="#8c2254" stroke-width="2.5" stroke-linecap="round" stroke-linejoin="round"/><ellipse cx="24.4" cy="51.5" rx="2.0" ry="1.2" fill="#7a1a48"/><polyline points="45.7,35.5 48.1,41.05 46.7,47.8" fill="none" stroke="#8c2254" stroke-width="2.5" stroke-linecap="round" stroke-linejoin="round"/><ellipse cx="46.1" cy="48.7" rx="1.9" ry="1.2" fill="#7a1a48"/><ellipse cx="26.4" cy="49.1" rx="1.5" ry="1.0" fill="#7a1a48"/><ellipse cx="42.1" cy="47.1" rx="1.5" ry="1.0" fill="#7a1a48"/><ellipse cx="45.9" cy="35.2" rx="3.42" ry="4.45" fill="#a04a62"/><ellipse cx="16" cy="23" rx="6" ry="4.2" transform="rotate(-8 16 23)" fill="#5c2252"/><ellipse cx="11.8" cy="24" rx="2.6" ry="2.3" fill="#5c2252"/><path d="M18.2,20.4 L23.2,15 L23.6,21.8 Z" fill="#5c2252"/><circle cx="15.6" cy="22.2" r="0.9" fill="#221428" opacity="0.8"/></g></svg></div>
<div class="cell" style="left:389.0px;top:158.3px"><svg width="68.6" height="68.4" viewBox="0 0 68.6 68.4" style="left:0;top:0"><g transform="matrix(0.9460 0 0 0.9714 1.096 0.785) translate(-1 1)" filter="url(#sb)"><path d="M45,28.22 Q51.65,30.6 56.7,34.6 Q51.15,33.22 45,31.64 Z" fill="#8a3a72"/><polyline points="30.2,37 28.8,43.25 27.6,48.5" fill="none" stroke="#4a0a44" stroke-width="2.25" stroke-linecap="round" stroke-linejoin="round"/><polyline points="44,37 43.3,42.25 42.5,46.5" fill="none" stroke="#4a0a44" stroke-width="2.25" stroke-linecap="round" stroke-linejoin="round"/><path d="M17,25.6 L21.6,20.6 L32.5,28 L29,36 L23.8,33.9 Z" fill="#8a3a72" stroke="#8a3a72" stroke-width="1" stroke-linejoin="round"/><path d="M23.5,28.4 C27.5,25.9 33.1,29.4 38.1,27.9 C42.1,25.4 46.7,25.4 48.7,30.4 C49.5,33.9 48.7,37.7 46.2,39.7 C42.7,37.7 38.1,36.2 34.1,37.5 C31.1,39.7 28.5,41.7 26.5,40.7 C23,36.7 22.5,31.9 23.5,28.4 Z" fill="#8a3a72"/><ellipse cx="40.1" cy="31.86" rx="8.5" ry="4.01" transform="rotate(4 40.1 31.86)" fill="#8a3068" opacity="0.85"/><ellipse cx="30.5" cy="31.1" rx="3.1" ry="2.6" fill="#c08244"/><polyline points="27.8,36.5 26.2,44.25 25,50.7" fill="none" stroke="#5c1252" stroke-width="2.5" stroke-linecap="round" stroke-linejoin="round"/><ellipse cx="24.4" cy="51.5" rx="2.0" ry="1.2" fill="#4a0a44"/><polyline points="45.7,35.5 48.1,41.05 46.7,47.8" fill="none" stroke="#5c1252" stroke-width="2.5" stroke-linecap="round" stroke-linejoin="round"/><ellipse cx="46.1" cy="48.7" rx="1.9" ry="1.2" fill="#4a0a44"/><ellipse cx="26.4" cy="49.1" rx="1.5" ry="1.0" fill="#4a0a44"/><ellipse cx="42.1" cy="47.1" rx="1.5" ry="1.0" fill="#4a0a44"/><ellipse cx="45.9" cy="35.2" rx="3.29" ry="4.24" fill="#8a3a72"/><ellipse cx="16" cy="23" rx="6" ry="4.2" transform="rotate(-8 16 23)" fill="#5c2262"/><ellipse cx="11.8" cy="24" rx="2.6" ry="2.3" fill="#5c2262"/><path d="M18.2,20.4 L23.2,15 L23.6,21.8 Z" fill="#4a1a50"/><path d="M10.2,22.4 L7.8,17 L12.2,21.2 Z" fill="#a080a0"/><circle cx="15.6" cy="22.2" r="0.9" fill="#221428" opacity="0.8"/></g></svg></div>
<div class="cell" style="left:463.6px;top:158.3px"><svg width="68.6" height="68.4" viewBox="0 0 68.6 68.4" style="left:0;top:0"><g transform="matrix(1.0015 0 0 1.0023 -0.124 -1.874) translate(0 1.5)" filter="url(#sb)"><path d="M45,28.22 Q49.85,30.2 52.7,33.4 Q49.35,32.58 45,31.64 Z" fill="#a28c4a"/><polyline points="30.2,37 28.8,43.25 27.6,48.5" fill="none" stroke="#7a6238" stroke-width="2.25" stroke-linecap="round" stroke-linejoin="round"/><polyline points="44,37 43.3,42.25 42.5,46.5" fill="none" stroke="#7a6238" stroke-width="2.25" stroke-linecap="round" stroke-linejoin="round"/><path d="M18.5,26.1 L23.1,21.1 L32.5,28 L29,36 L24.6,33.9 Z" fill="#a28c4a" stroke="#a28c4a" stroke-width="1" stroke-linejoin="round"/><path d="M23.5,28.4 C27.5,25.9 33.1,29.4 38.1,27.9 C42.1,25.4 46.7,25.4 48.7,30.4 C49.5,33.9 48.7,37.7 46.2,39.7 C42.7,37.7 38.1,36.2 34.1,37.5 C31.1,39.7 28.5,41.7 26.5,40.7 C23,36.7 22.5,31.9 23.5,28.4 Z" fill="#a28c4a"/><ellipse cx="40.1" cy="31.86" rx="8.5" ry="4.01" transform="rotate(4 40.1 31.86)" fill="#7a6a40" opacity="0.85"/><polyline points="27.8,36.5 26.2,44.25 25,50.7" fill="none" stroke="#8c7242" stroke-width="2.5" stroke-linecap="round" stroke-linejoin="round"/><ellipse cx="24.4" cy="51.5" rx="2.0" ry="1.2" fill="#7a6238"/><polyline points="45.7,35.5 48.1,41.05 46.7,47.8" fill="none" stroke="#8c7242" stroke-width="2.5" stroke-linecap="round" stroke-linejoin="round"/><ellipse cx="46.1" cy="48.7" rx="1.9" ry="1.2" fill="#7a6238"/><ellipse cx="26.4" cy="49.1" rx="1.5" ry="1.0" fill="#7a6238"/><ellipse cx="42.1" cy="47.1" rx="1.5" ry="1.0" fill="#7a6238"/><ellipse cx="45.9" cy="35.2" rx="3.29" ry="4.24" fill="#a28c4a"/><path d="M21.25,20.95 L16,20.8 L9.62,23.95 L9.85,25.45 L15.25,26.05 L21.25,26.2 Z" fill="#b09a5a" stroke="#b09a5a" stroke-width="1" stroke-linejoin="round"/><path d="M19.7,20.9 L24.7,15.5 L25.1,22.3 Z" fill="#8a7a40"/><circle cx="17.1" cy="22.7" r="0.9" fill="#221428" opacity="0.8"/></g></svg></div>
<div class="cell" style="left:538.3px;top:158.3px"><svg width="68.6" height="68.4" viewBox="0 0 68.6 68.4" style="left:0;top:0"><g transform="matrix(0.9701 0 0 1.0034 0.748 0.656) translate(-1 1)" filter="url(#sb)"><path d="M45,27.92 Q50.3,30 53.7,33.4 Q49.8,32.44 45,31.34 Z" fill="#7b6b92"/><polyline points="30.2,37 28.8,42.75 27.6,47.5" fill="none" stroke="#201840" stroke-width="2.25" stroke-linecap="round" stroke-linejoin="round"/><polyline points="44,37 43.3,41.75 42.5,45.5" fill="none" stroke="#201840" stroke-width="2.25" stroke-linecap="round" stroke-linejoin="round"/><path d="M17,25.6 L21.6,20.6 L32.5,27.4 L29,36 L23.8,34.3 Z" fill="#7b6b92" stroke="#7b6b92" stroke-width="1" stroke-linejoin="round"/><path d="M23.5,27.8 C27.5,25.3 33.1,28.8 38.1,27.3 C42.1,24.8 46.7,24.8 48.7,29.8 C49.5,33.3 48.7,38.4 46.2,40.4 C42.7,38.4 38.1,36.9 34.1,38.2 C31.1,40.4 28.5,42.4 26.5,41.4 C23,37.4 22.5,31.3 23.5,27.8 Z" fill="#7b6b92"/><ellipse cx="40.1" cy="31.8" rx="8.5" ry="4.45" transform="rotate(4 40.1 31.8)" fill="#5a7a82" opacity="0.85"/><path d="M29.1,27.9 L31.9,23.9 L31.7,27.9 Z M32.6,27.9 L35.4,24.7 L35.2,27.9 Z M36.1,27.9 L38.9,23.9 L38.7,27.9 Z M39.6,27.9 L42.4,24.7 L42.2,27.9 Z M43.1,27.9 L45.9,23.9 L45.7,27.9 Z " fill="#3a3a58"/><polyline points="27.8,36.5 26.2,43.75 25,49.7" fill="none" stroke="#2c2252" stroke-width="2.5" stroke-linecap="round" stroke-linejoin="round"/><ellipse cx="24.4" cy="50.5" rx="2.0" ry="1.2" fill="#201840"/><polyline points="45.7,35.5 48.1,40.75 46.7,46.8" fill="none" stroke="#2c2252" stroke-width="2.5" stroke-linecap="round" stroke-linejoin="round"/><ellipse cx="46.1" cy="47.7" rx="1.9" ry="1.2" fill="#201840"/><ellipse cx="26.4" cy="48.1" rx="1.5" ry="1.0" fill="#201840"/><ellipse cx="42.1" cy="46.1" rx="1.5" ry="1.0" fill="#201840"/><ellipse cx="45.9" cy="35.2" rx="3.55" ry="4.65" fill="#7b6b92"/><ellipse cx="16" cy="23" rx="6.6" ry="5.2" transform="rotate(10 16 23)" fill="#8c7c8a"/><ellipse cx="11.6" cy="24.6" rx="3.1" ry="3" fill="#6a5a70"/><path d="M16.5,19.4 L19,12 L21,17 L23.4,13.4 L24.2,22.4 Z" fill="#2a2040"/><circle cx="15.6" cy="22.2" r="0.9" fill="#221428" opacity="0.8"/></g></svg></div>
<div class="cell" style="left:613.0px;top:158.3px"><svg width="68.6" height="68.4" viewBox="0 0 68.6 68.4" style="left:0;top:0"><g transform="matrix(0.9191 0 0 0.9196 -0.432 3.022) translate(0.5 1.5)" filter="url(#sb)"><path d="M45,27.92 Q53,30.6 59.7,35.2 Q52.5,33.4 45,31.34 Z" fill="#a81c46"/><polyline points="30.2,37 28.8,42.25 27.6,46.5" fill="none" stroke="#901040" stroke-width="2.25" stroke-linecap="round" stroke-linejoin="round"/><polyline points="44,37 43.3,41.25 42.5,44.5" fill="none" stroke="#901040" stroke-width="2.25" stroke-linecap="round" stroke-linejoin="round"/><path d="M17,27.6 L21.6,22.6 L32.5,27.4 L29,36 L23.8,34.3 Z" fill="#a81c46" stroke="#a81c46" stroke-width="1" stroke-linejoin="round"/><path d="M23.5,27.8 C27.5,25.3 33.1,28.8 38.1,27.3 C42.1,24.8 46.7,24.8 48.7,29.8 C49.5,33.3 48.7,38.4 46.2,40.4 C42.7,38.4 38.1,36.9 34.1,38.2 C31.1,40.4 28.5,42.4 26.5,41.4 C23,37.4 22.5,31.3 23.5,27.8 Z" fill="#a81c46"/><ellipse cx="40.1" cy="31.8" rx="8.5" ry="4.45" transform="rotate(4 40.1 31.8)" fill="#9c1840" opacity="0.85"/><path d="M29.1,27.9 L31.9,23.9 L31.7,27.9 Z M32.6,27.9 L35.4,24.7 L35.2,27.9 Z M36.1,27.9 L38.9,23.9 L38.7,27.9 Z M39.6,27.9 L42.4,24.7 L42.2,27.9 Z M43.1,27.9 L45.9,23.9 L45.7,27.9 Z " fill="#8a1a3a"/><polyline points="27.8,36.5 26.2,43.25 25,48.7" fill="none" stroke="#a21a4a" stroke-width="2.5" stroke-linecap="round" stroke-linejoin="round"/><ellipse cx="24.4" cy="49.5" rx="2.0" ry="1.2" fill="#901040"/><polyline points="45.7,35.5 48.1,40.45 46.7,45.8" fill="none" stroke="#a21a4a" stroke-width="2.5" stroke-linecap="round" stroke-linejoin="round"/><ellipse cx="46.1" cy="46.7" rx="1.9" ry="1.2" fill="#901040"/><ellipse cx="26.4" cy="47.1" rx="1.5" ry="1.0" fill="#901040"/><ellipse cx="42.1" cy="45.1" rx="1.5" ry="1.0" fill="#901040"/><ellipse cx="45.9" cy="35.2" rx="3.55" ry="4.65" fill="#a81c46"/><ellipse cx="16" cy="25" rx="6" ry="4.2" transform="rotate(-8 16 25)" fill="#b42a50"/><ellipse cx="11.8" cy="26" rx="2.6" ry="2.3" fill="#b42a50"/><path d="M17.6,21.6 L19.4,15.6 L20.2,21.4 Z M20.4,22 L24.6,17.4 L23,23 Z" fill="#4a1a2a"/><circle cx="15.6" cy="24.2" r="0.9" fill="#221428" opacity="0.8"/></g></svg></div>
<div class="cell" style="left:90.2px;top:232.9px"><svg width="68.6" height="68.4" viewBox="0 0 68.6 68.4" style="left:0;top:0"><g transform="matrix(0.9033 0 0 0.8423 -0.748 7.160) translate(0 -0.5)" filter="url(#sb)"><path d="M45,28.37 Q52.55,30.95 58.7,35.35 Q52.05,33.69 45,31.79 Z" fill="#8a3060"/><polyline points="30.2,37 28.8,43.25 27.6,48.5" fill="none" stroke="#201840" stroke-width="2.25" stroke-linecap="round" stroke-linejoin="round"/><polyline points="44,37 43.3,42.25 42.5,46.5" fill="none" stroke="#201840" stroke-width="2.25" stroke-linecap="round" stroke-linejoin="round"/><path d="M17,25.6 L21.6,20.6 L32.5,28.3 L29,36 L23.8,33.7 Z" fill="#6c3c72" stroke="#6c3c72" stroke-width="1" stroke-linejoin="round"/><path d="M23.5,28.7 C27.5,26.2 33.1,29.7 38.1,28.2 C42.1,25.7 46.7,25.7 48.7,30.7 C49.5,34.2 48.7,37.35 46.2,39.35 C42.7,37.35 38.1,35.85 34.1,37.15 C31.1,39.35 28.5,41.35 26.5,40.35 C23,36.35 22.5,32.2 23.5,28.7 Z" fill="#6c3c72"/><ellipse cx="40.1" cy="31.88" rx="8.5" ry="3.79" transform="rotate(4 40.1 31.88)" fill="#8c3262" opacity="0.85"/><path d="M32.1,29 L37.1,26 L41.6,23.8 L39.1,27.4 L37.1,29.4 Z" fill="#5a3060"/><polyline points="27.8,36.5 26.2,44.25 25,50.7" fill="none" stroke="#2c2252" stroke-width="2.5" stroke-linecap="round" stroke-linejoin="round"/><ellipse cx="24.4" cy="51.5" rx="2.0" ry="1.2" fill="#201840"/><polyline points="45.7,35.5 48.1,41.05 46.7,47.8" fill="none" stroke="#2c2252" stroke-width="2.5" stroke-linecap="round" stroke-linejoin="round"/><ellipse cx="46.1" cy="48.7" rx="1.9" ry="1.2" fill="#201840"/><ellipse cx="26.4" cy="49.1" rx="1.5" ry="1.0" fill="#201840"/><ellipse cx="42.1" cy="47.1" rx="1.5" ry="1.0" fill="#201840"/><ellipse cx="45.9" cy="35.2" rx="3.15" ry="4.02" fill="#6c3c72"/><ellipse cx="16" cy="23" rx="5.28" ry="4.16" transform="rotate(10 16 23)" fill="#7c6c82"/><ellipse cx="12.48" cy="24.6" rx="2.48" ry="2.4" fill="#7c6c82"/><path d="M17.6,19.6 L19.4,13.6 L20.2,19.4 Z M20.4,20 L24.6,15.4 L23,21 Z" fill="#2a2040"/><circle cx="15.6" cy="22.2" r="0.9" fill="#221428" opacity="0.8"/></g></svg></div>
<div class="cell" style="left:164.9px;top:232.9px"><svg width="68.6" height="68.4" viewBox="0 0 68.6 68.4" style="left:0;top:0"><g transform="matrix(0.9609 0 0 0.9432 -2.812 1.800) translate(-1 -0.5)" filter="url(#sb)"><path d="M45,28.22 Q52.55,30.8 58.7,35.2 Q52.05,33.54 45,31.64 Z" fill="#8a3a5a"/><polyline points="30.2,37 28.8,43.25 27.6,48.5" fill="none" stroke="#5a2048" stroke-width="2.25" stroke-linecap="round" stroke-linejoin="round"/><polyline points="44,37 43.3,42.25 42.5,46.5" fill="none" stroke="#5a2048" stroke-width="2.25" stroke-linecap="round" stroke-linejoin="round"/><path d="M17,24.6 L21.6,19.6 L32.5,28 L29,36 L23.8,33.9 Z" fill="#8c5c82" stroke="#8c5c82" stroke-width="1" stroke-linejoin="round"/><path d="M23.5,28.4 C27.5,25.9 33.1,29.4 38.1,27.9 C42.1,25.4 46.7,25.4 48.7,30.4 C49.5,33.9 48.7,37.7 46.2,39.7 C42.7,37.7 38.1,36.2 34.1,37.5 C31.1,39.7 28.5,41.7 26.5,40.7 C23,36.7 22.5,31.9 23.5,28.4 Z" fill="#8c5c82"/><ellipse cx="40.1" cy="31.86" rx="8.5" ry="4.01" transform="rotate(4 40.1 31.86)" fill="#8a4a6a" opacity="0.85"/><polyline points="27.8,36.5 26.2,44.25 25,50.7" fill="none" stroke="#6c2c52" stroke-width="2.5" stroke-linecap="round" stroke-linejoin="round"/><ellipse cx="24.4" cy="51.5" rx="2.0" ry="1.2" fill="#5a2048"/><polyline points="45.7,35.5 48.1,41.05 46.7,47.8" fill="none" stroke="#6c2c52" stroke-width="2.5" stroke-linecap="round" stroke-linejoin="round"/><ellipse cx="46.1" cy="48.7" rx="1.9" ry="1.2" fill="#5a2048"/><ellipse cx="26.4" cy="49.1" rx="1.5" ry="1.0" fill="#5a2048"/><ellipse cx="42.1" cy="47.1" rx="1.5" ry="1.0" fill="#5a2048"/><ellipse cx="45.9" cy="35.2" rx="3.29" ry="4.24" fill="#8c5c82"/><ellipse cx="16" cy="22" rx="6.6" ry="5.2" transform="rotate(10 16 22)" fill="#9c828c"/><ellipse cx="11.6" cy="23.6" rx="3.1" ry="3" fill="#9c828c"/><path d="M17.6,18.6 L19.4,12.6 L20.2,18.4 Z M20.4,19 L24.6,14.4 L23,20 Z" fill="#3a2a40"/><circle cx="15.6" cy="21.2" r="0.9" fill="#221428" opacity="0.8"/></g></svg></div>
<div class="cell" style="left:239.6px;top:232.9px"><svg width="68.6" height="68.4" viewBox="0 0 68.6 68.4" style="left:0;top:0"><g transform="matrix(0.9426 0 0 0.9898 -1.684 2.187) translate(0.5 0)" filter="url(#sb)"><path d="M45,27.77 Q51.2,30.05 55.7,33.85 Q50.7,32.61 45,31.19 Z" fill="#5c8c5c"/><polyline points="30.2,37 28.8,42.25 27.6,46.5" fill="none" stroke="#1a2838" stroke-width="2.25" stroke-linecap="round" stroke-linejoin="round"/><polyline points="44,37 43.3,41.25 42.5,44.5" fill="none" stroke="#1a2838" stroke-width="2.25" stroke-linecap="round" stroke-linejoin="round"/><path d="M17,25.6 L21.6,20.6 L32.5,27.1 L29,36 L23.8,34.5 Z" fill="#5c8c5c" stroke="#5c8c5c" stroke-width="1" stroke-linejoin="round"/><path d="M23.5,27.5 C27.5,25 33.1,28.5 38.1,27 C42.1,24.5 46.7,24.5 48.7,29.5 C49.5,33 48.7,38.75 46.2,40.75 C42.7,38.75 38.1,37.25 34.1,38.55 C31.1,40.75 28.5,42.75 26.5,41.75 C23,37.75 22.5,31 23.5,27.5 Z" fill="#5c8c5c"/><ellipse cx="40.1" cy="31.77" rx="8.5" ry="4.68" transform="rotate(4 40.1 31.77)" fill="#5a7a5a" opacity="0.85"/><ellipse cx="35.1" cy="37.55" rx="6" ry="2.3" fill="#8a8a7a" opacity="0.8"/><polyline points="27.8,36.5 26.2,43.25 25,48.7" fill="none" stroke="#223242" stroke-width="2.5" stroke-linecap="round" stroke-linejoin="round"/><ellipse cx="24.4" cy="49.5" rx="2.0" ry="1.2" fill="#1a2838"/><polyline points="45.7,35.5 48.1,40.45 46.7,45.8" fill="none" stroke="#223242" stroke-width="2.5" stroke-linecap="round" stroke-linejoin="round"/><ellipse cx="46.1" cy="46.7" rx="1.9" ry="1.2" fill="#1a2838"/><ellipse cx="26.4" cy="47.1" rx="1.5" ry="1.0" fill="#1a2838"/><ellipse cx="42.1" cy="45.1" rx="1.5" ry="1.0" fill="#1a2838"/><ellipse cx="45.9" cy="35.2" rx="3.67" ry="4.85" fill="#5c8c5c"/><ellipse cx="16" cy="23" rx="5.61" ry="4.42" transform="rotate(10 16 23)" fill="#6c8c6c"/><ellipse cx="12.26" cy="24.6" rx="2.63" ry="2.55" fill="#6c8c6c"/><path d="M17.6,19.6 L19.4,13.6 L20.2,19.4 Z M20.4,20 L24.6,15.4 L23,21 Z" fill="#1e2a30"/><circle cx="15.6" cy="22.2" r="0.9" fill="#221428" opacity="0.8"/></g></svg></div>
<div class="cell" style="left:314.3px;top:232.9px"><svg width="68.6" height="68.4" viewBox="0 0 68.6 68.4" style="left:0;top:0"><g transform="matrix(0.9686 0 0 0.9020 -4.403 5.205) translate(0 0)" filter="url(#sb)"><path d="M45,27.92 Q52.55,30.5 58.7,34.9 Q52.05,33.24 45,31.34 Z" fill="#aa1e4c"/><polyline points="30.2,37 28.8,42.25 27.6,46.5" fill="none" stroke="#70103a" stroke-width="2.25" stroke-linecap="round" stroke-linejoin="round"/><polyline points="44,37 43.3,41.25 42.5,44.5" fill="none" stroke="#70103a" stroke-width="2.25" stroke-linecap="round" stroke-linejoin="round"/><path d="M20,25.1 L24.6,20.1 L32.5,27.4 L29,36 L23.8,34.3 Z" fill="#aa1e4c" stroke="#aa1e4c" stroke-width="1" stroke-linejoin="round"/><path d="M23.5,27.8 C27.5,25.3 33.1,28.8 38.1,27.3 C42.1,24.8 46.7,24.8 48.7,29.8 C49.5,33.3 48.7,38.4 46.2,40.4 C42.7,38.4 38.1,36.9 34.1,38.2 C31.1,40.4 28.5,42.4 26.5,41.4 C23,37.4 22.5,31.3 23.5,27.8 Z" fill="#aa1e4c"/><ellipse cx="40.1" cy="31.8" rx="8.5" ry="4.45" transform="rotate(4 40.1 31.8)" fill="#9c1a46" opacity="0.85"/><ellipse cx="35.1" cy="37.2" rx="6" ry="2.3" fill="#c06a80" opacity="0.8"/><path d="M29.1,27.9 L31.9,23.9 L31.7,27.9 Z M32.6,27.9 L35.4,24.7 L35.2,27.9 Z M36.1,27.9 L38.9,23.9 L38.7,27.9 Z M39.6,27.9 L42.4,24.7 L42.2,27.9 Z M43.1,27.9 L45.9,23.9 L45.7,27.9 Z " fill="#8a1a3c"/><polyline points="27.8,36.5 26.2,43.25 25,48.7" fill="none" stroke="#8c1442" stroke-width="2.5" stroke-linecap="round" stroke-linejoin="round"/><ellipse cx="24.4" cy="49.5" rx="2.0" ry="1.2" fill="#70103a"/><polyline points="45.7,35.5 48.1,40.45 46.7,45.8" fill="none" stroke="#8c1442" stroke-width="2.5" stroke-linecap="round" stroke-linejoin="round"/><ellipse cx="46.1" cy="46.7" rx="1.9" ry="1.2" fill="#70103a"/><ellipse cx="26.4" cy="47.1" rx="1.5" ry="1.0" fill="#70103a"/><ellipse cx="42.1" cy="45.1" rx="1.5" ry="1.0" fill="#70103a"/><ellipse cx="45.9" cy="35.2" rx="3.55" ry="4.65" fill="#aa1e4c"/><path d="M23,19.94 L18.2,19.46 L9.4,26.66 L16.6,25.22 L23,25.38 Z" fill="#ba3258" stroke="#ba3258" stroke-width="0.8" stroke-linejoin="round"/><path d="M16.5,19.1 L24.8,13.5 L26.4,21.5 Z" fill="#4a1a30"/><circle cx="18.6" cy="21.7" r="0.9" fill="#221428" opacity="0.8"/></g></svg></div>
<div class="cell" style="left:389.0px;top:232.9px"><svg width="68.6" height="68.4" viewBox="0 0 68.6 68.4" style="left:0;top:0"><g transform="matrix(0.9409 0 0 0.9739 0.023 3.385) translate(-1.5 -0.5)" filter="url(#sb)"><path d="M45,27.55 Q53,30.23 59.7,34.83 Q52.5,33.02 45,30.96 Z" fill="#7a2a50"/><polyline points="30.2,37 28.8,41.75 27.6,45.5" fill="none" stroke="#4a0a38" stroke-width="2.25" stroke-linecap="round" stroke-linejoin="round"/><polyline points="44,37 43.3,40.75 42.5,43.5" fill="none" stroke="#4a0a38" stroke-width="2.25" stroke-linecap="round" stroke-linejoin="round"/><path d="M17,25.6 L21.6,20.6 L32.5,26.65 L29,36 L23.8,34.8 Z" fill="#8c4a6e" stroke="#8c4a6e" stroke-width="1" stroke-linejoin="round"/><path d="M23.5,27.05 C27.5,24.55 33.1,28.05 38.1,26.55 C42.1,24.05 46.7,24.05 48.7,29.05 C49.5,32.55 48.7,39.27 46.2,41.27 C42.7,39.27 38.1,37.77 34.1,39.07 C31.1,41.27 28.5,43.27 26.5,42.27 C23,38.27 22.5,30.55 23.5,27.05 Z" fill="#8c4a6e"/><ellipse cx="40.1" cy="31.73" rx="8.5" ry="5.01" transform="rotate(4 40.1 31.73)" fill="#7a4a84" opacity="0.85"/><ellipse cx="35.1" cy="38.07" rx="6" ry="2.3" fill="#b08a90" opacity="0.8"/><path d="M32.1,27.05 L34.6,21.95 L44.6,24.95 L46.1,27.95 L39.1,26.75 Z" fill="#5a3a80"/><polyline points="27.8,36.5 26.2,42.75 25,47.7" fill="none" stroke="#5c1242" stroke-width="2.5" stroke-linecap="round" stroke-linejoin="round"/><ellipse cx="24.4" cy="48.5" rx="2.0" ry="1.2" fill="#4a0a38"/><polyline points="45.7,35.5 48.1,40.15 46.7,44.8" fill="none" stroke="#5c1242" stroke-width="2.5" stroke-linecap="round" stroke-linejoin="round"/><ellipse cx="46.1" cy="45.7" rx="1.9" ry="1.2" fill="#4a0a38"/><ellipse cx="26.4" cy="46.1" rx="1.5" ry="1.0" fill="#4a0a38"/><ellipse cx="42.1" cy="44.1" rx="1.5" ry="1.0" fill="#4a0a38"/><ellipse cx="45.9" cy="35.2" rx="3.85" ry="5.13" fill="#8c4a6e"/><ellipse cx="16" cy="23" rx="7.26" ry="5.72" transform="rotate(10 16 23)" fill="#a27c82"/><ellipse cx="11.16" cy="24.6" rx="3.41" ry="3.3" fill="#7a5a66"/><path d="M17.6,19.6 L19.4,13.6 L20.2,19.4 Z M20.4,20 L24.6,15.4 L23,21 Z" fill="#4a2a48"/><circle cx="15.6" cy="22.2" r="0.9" fill="#221428" opacity="0.8"/></g></svg></div>
<div class="cell" style="left:463.6px;top:232.9px"><svg width="68.6" height="68.4" viewBox="0 0 68.6 68.4" style="left:0;top:0"><g transform="matrix(1.0498 0 0 0.9791 -6.437 2.831) translate(0 -1)" filter="url(#sb)"><path d="M45,27.7 Q52.1,30.18 57.7,34.38 Q51.6,32.86 45,31.12 Z" fill="#6a6a60"/><polyline points="30.2,37 28.8,42.25 27.6,46.5" fill="none" stroke="#201840" stroke-width="2.25" stroke-linecap="round" stroke-linejoin="round"/><polyline points="44,37 43.3,41.25 42.5,44.5" fill="none" stroke="#201840" stroke-width="2.25" stroke-linecap="round" stroke-linejoin="round"/><path d="M20,24.6 L24.6,19.6 L32.5,26.95 L29,36 L23.8,34.6 Z" fill="#7c7c6c" stroke="#7c7c6c" stroke-width="1" stroke-linejoin="round"/><path d="M23.5,27.35 C27.5,24.85 33.1,28.35 38.1,26.85 C42.1,24.35 46.7,24.35 48.7,29.35 C49.5,32.85 48.7,38.92 46.2,40.92 C42.7,38.92 38.1,37.42 34.1,38.72 C31.1,40.92 28.5,42.92 26.5,41.92 C23,37.92 22.5,30.85 23.5,27.35 Z" fill="#7c7c6c"/><ellipse cx="40.1" cy="31.76" rx="8.5" ry="4.79" transform="rotate(4 40.1 31.76)" fill="#6c5c8c" opacity="0.85"/><ellipse cx="35.1" cy="37.72" rx="6" ry="2.3" fill="#8a8060" opacity="0.8"/><path d="M32.1,27.35 L34.6,22.25 L44.6,25.25 L46.1,28.25 L39.1,27.05 Z" fill="#3a2a50"/><polyline points="27.8,36.5 26.2,43.25 25,48.7" fill="none" stroke="#2c2252" stroke-width="2.5" stroke-linecap="round" stroke-linejoin="round"/><ellipse cx="24.4" cy="49.5" rx="2.0" ry="1.2" fill="#201840"/><polyline points="45.7,35.5 48.1,40.45 46.7,45.8" fill="none" stroke="#2c2252" stroke-width="2.5" stroke-linecap="round" stroke-linejoin="round"/><ellipse cx="46.1" cy="46.7" rx="1.9" ry="1.2" fill="#201840"/><ellipse cx="26.4" cy="47.1" rx="1.5" ry="1.0" fill="#201840"/><ellipse cx="42.1" cy="45.1" rx="1.5" ry="1.0" fill="#201840"/><ellipse cx="45.9" cy="35.2" rx="3.73" ry="4.94" fill="#7c7c6c"/><path d="M23.25,19.11 L17.3,18.94 L10.08,22.51 L10.33,24.21 L16.45,24.89 L23.25,25.06 Z" fill="#8c828c" stroke="#8c828c" stroke-width="1" stroke-linejoin="round"/><path d="M16.5,18.6 L24.8,13 L26.4,21 Z" fill="#2a2040"/><circle cx="18.6" cy="21.2" r="0.9" fill="#221428" opacity="0.8"/></g></svg></div>
<div class="cell" style="left:538.3px;top:232.9px"><svg width="68.6" height="68.4" viewBox="0 0 68.6 68.4" style="left:0;top:0"><g transform="matrix(1.0190 0 0 0.8639 -6.141 4.548) translate(0 0)" filter="url(#sb)"><path d="M45,28.45 Q52.55,31.03 58.7,35.43 Q52.05,33.77 45,31.87 Z" fill="#a23262"/><polyline points="30.2,37 28.8,43.25 27.6,48.5" fill="none" stroke="#4a0a38" stroke-width="2.25" stroke-linecap="round" stroke-linejoin="round"/><polyline points="44,37 43.3,42.25 42.5,46.5" fill="none" stroke="#4a0a38" stroke-width="2.25" stroke-linecap="round" stroke-linejoin="round"/><path d="M18.5,21.6 L23.1,16.6 L32.5,28.45 L29,36 L25.08,33.6 Z" fill="#a23262" stroke="#a23262" stroke-width="1" stroke-linejoin="round"/><path d="M23.5,28.85 C27.5,26.35 33.1,29.85 38.1,28.35 C42.1,25.85 46.7,25.85 48.7,30.85 C49.5,34.35 48.7,37.17 46.2,39.17 C42.7,37.17 38.1,35.67 34.1,36.97 C31.1,39.17 28.5,41.17 26.5,40.17 C23,36.17 22.5,32.35 23.5,28.85 Z" fill="#a23262"/><ellipse cx="40.1" cy="31.9" rx="8.5" ry="3.68" transform="rotate(4 40.1 31.9)" fill="#98305a" opacity="0.85"/><path d="M32.1,29.15 L37.1,26.15 L41.6,23.95 L39.1,27.55 L37.1,29.55 Z" fill="#8a2a58"/><polyline points="27.8,36.5 26.2,44.25 25,50.7" fill="none" stroke="#5c1242" stroke-width="2.5" stroke-linecap="round" stroke-linejoin="round"/><ellipse cx="24.4" cy="51.5" rx="2.0" ry="1.2" fill="#4a0a38"/><polyline points="45.7,35.5 48.1,41.05 46.7,47.8" fill="none" stroke="#5c1242" stroke-width="2.5" stroke-linecap="round" stroke-linejoin="round"/><ellipse cx="46.1" cy="48.7" rx="1.9" ry="1.2" fill="#4a0a38"/><ellipse cx="26.4" cy="49.1" rx="1.5" ry="1.0" fill="#4a0a38"/><ellipse cx="42.1" cy="47.1" rx="1.5" ry="1.0" fill="#4a0a38"/><ellipse cx="45.9" cy="35.2" rx="3.07" ry="3.91" fill="#a23262"/><ellipse cx="17.5" cy="19" rx="4.32" ry="3.02" transform="rotate(-8 17.5 19)" fill="#7c2262"/><ellipse cx="14.48" cy="20" rx="1.87" ry="1.66" fill="#7c2262"/><path d="M13.32,18.4 L11.6,13 L14.76,17.2 Z" fill="#c0a0b0"/><circle cx="17.1" cy="18.2" r="0.9" fill="#221428" opacity="0.8"/></g></svg></div>
<div class="cell" style="left:613.0px;top:232.9px"><svg width="68.6" height="68.4" viewBox="0 0 68.6 68.4" style="left:0;top:0"><g transform="matrix(1.0045 0 0 0.9375 -3.084 2.397) translate(0 -0.5)" filter="url(#sb)"><path d="M45,28.37 Q53,31.05 59.7,35.65 Q52.5,33.85 45,31.79 Z" fill="#9c3c52"/><polyline points="30.2,37 28.8,43.25 27.6,48.5" fill="none" stroke="#6a1a38" stroke-width="2.25" stroke-linecap="round" stroke-linejoin="round"/><polyline points="44,37 43.3,42.25 42.5,46.5" fill="none" stroke="#6a1a38" stroke-width="2.25" stroke-linecap="round" stroke-linejoin="round"/><path d="M17,25.6 L21.6,20.6 L32.5,28.3 L29,36 L23.8,33.7 Z" fill="#9c3c52" stroke="#9c3c52" stroke-width="1" stroke-linejoin="round"/><path d="M23.5,28.7 C27.5,26.2 33.1,29.7 38.1,28.2 C42.1,25.7 46.7,25.7 48.7,30.7 C49.5,34.2 48.7,37.35 46.2,39.35 C42.7,37.35 38.1,35.85 34.1,37.15 C31.1,39.35 28.5,41.35 26.5,40.35 C23,36.35 22.5,32.2 23.5,28.7 Z" fill="#9c3c52"/><ellipse cx="40.1" cy="31.88" rx="8.5" ry="3.79" transform="rotate(4 40.1 31.88)" fill="#a04a58" opacity="0.85"/><polyline points="27.8,36.5 26.2,44.25 25,50.7" fill="none" stroke="#7c2242" stroke-width="2.5" stroke-linecap="round" stroke-linejoin="round"/><ellipse cx="24.4" cy="51.5" rx="2.0" ry="1.2" fill="#6a1a38"/><polyline points="45.7,35.5 48.1,41.05 46.7,47.8" fill="none" stroke="#7c2242" stroke-width="2.5" stroke-linecap="round" stroke-linejoin="round"/><ellipse cx="46.1" cy="48.7" rx="1.9" ry="1.2" fill="#6a1a38"/><ellipse cx="26.4" cy="49.1" rx="1.5" ry="1.0" fill="#6a1a38"/><ellipse cx="42.1" cy="47.1" rx="1.5" ry="1.0" fill="#6a1a38"/><ellipse cx="45.9" cy="35.2" rx="3.15" ry="4.02" fill="#9c3c52"/><ellipse cx="16" cy="23" rx="5.28" ry="4.16" transform="rotate(10 16 23)" fill="#b26c62"/><ellipse cx="12.48" cy="24.6" rx="2.48" ry="2.4" fill="#b26c62"/><path d="M17.6,19.6 L19.4,13.6 L20.2,19.4 Z M20.4,20 L24.6,15.4 L23,21 Z" fill="#7a2a38"/><circle cx="15.6" cy="22.2" r="0.9" fill="#221428" opacity="0.8"/></g></svg></div>
<div class="cell" style="left:90.2px;top:307.5px"><svg width="68.6" height="68.4" viewBox="0 0 68.6 68.4" style="left:0;top:0"><g transform="matrix(0.9183 0 0 0.9502 0.728 -0.378) translate(-1.5 1)" filter="url(#sb)"><path d="M45,28.22 Q53,30.9 59.7,35.5 Q52.5,33.7 45,31.64 Z" fill="#b22c82"/><polyline points="30.2,37 28.8,43.25 27.6,48.5" fill="none" stroke="#900a58" stroke-width="2.25" stroke-linecap="round" stroke-linejoin="round"/><polyline points="44,37 43.3,42.25 42.5,46.5" fill="none" stroke="#900a58" stroke-width="2.25" stroke-linecap="round" stroke-linejoin="round"/><path d="M16,26.6 L20.6,21.6 L32.5,28 L29,36 L23.8,33.9 Z" fill="#b22c82" stroke="#b22c82" stroke-width="1" stroke-linejoin="round"/><path d="M23.5,28.4 C27.5,25.9 33.1,29.4 38.1,27.9 C42.1,25.4 46.7,25.4 48.7,30.4 C49.5,33.9 48.7,37.7 46.2,39.7 C42.7,37.7 38.1,36.2 34.1,37.5 C31.1,39.7 28.5,41.7 26.5,40.7 C23,36.7 22.5,31.9 23.5,28.4 Z" fill="#b22c82"/><ellipse cx="40.1" cy="31.86" rx="8.5" ry="4.01" transform="rotate(4 40.1 31.86)" fill="#b03a78" opacity="0.85"/><ellipse cx="35.1" cy="36.5" rx="6" ry="2.3" fill="#c87a9a" opacity="0.8"/><path d="M32.1,28.7 L37.1,25.7 L41.6,23.5 L39.1,27.1 L37.1,29.1 Z" fill="#c04a8a"/><polyline points="27.8,36.5 26.2,44.25 25,50.7" fill="none" stroke="#a21262" stroke-width="2.5" stroke-linecap="round" stroke-linejoin="round"/><ellipse cx="24.4" cy="51.5" rx="2.0" ry="1.2" fill="#900a58"/><polyline points="45.7,35.5 48.1,41.05 46.7,47.8" fill="none" stroke="#a21262" stroke-width="2.5" stroke-linecap="round" stroke-linejoin="round"/><ellipse cx="46.1" cy="48.7" rx="1.9" ry="1.2" fill="#900a58"/><ellipse cx="26.4" cy="49.1" rx="1.5" ry="1.0" fill="#900a58"/><ellipse cx="42.1" cy="47.1" rx="1.5" ry="1.0" fill="#900a58"/><ellipse cx="45.9" cy="35.2" rx="3.29" ry="4.24" fill="#b22c82"/><ellipse cx="15" cy="24" rx="6" ry="4.2" transform="rotate(-8 15 24)" fill="#b22c7c"/><ellipse cx="10.8" cy="25" rx="2.6" ry="2.3" fill="#b22c7c"/><ellipse cx="19.2" cy="19" rx="3.6" ry="3.0" fill="#4a0840"/><circle cx="14.6" cy="23.2" r="0.9" fill="#221428" opacity="0.8"/></g></svg></div>
<div class="cell" style="left:164.9px;top:307.5px"><svg width="68.6" height="68.4" viewBox="0 0 68.6 68.4" style="left:0;top:0"><g transform="matrix(0.9861 0 0 1.0882 -0.490 -3.379) translate(2 1.5)" filter="url(#sb)"><polyline points="30.2,37 28.8,41.75 27.6,45.5" fill="none" stroke="#261a40" stroke-width="2.25" stroke-linecap="round" stroke-linejoin="round"/><polyline points="44,37 43.3,40.75 42.5,43.5" fill="none" stroke="#261a40" stroke-width="2.25" stroke-linecap="round" stroke-linejoin="round"/><path d="M18.5,26.1 L23.1,21.1 L32.5,26.8 L29,36 L23.8,34.7 Z" fill="#6c4c82" stroke="#6c4c82" stroke-width="1" stroke-linejoin="round"/><path d="M23.5,27.2 C27.5,24.7 33.1,28.2 38.1,26.7 C42.1,24.2 46.7,24.2 48.7,29.2 C49.5,32.7 48.7,39.1 46.2,41.1 C42.7,39.1 38.1,37.6 34.1,38.9 C31.1,41.1 28.5,43.1 26.5,42.1 C23,38.1 22.5,30.7 23.5,27.2 Z" fill="#6c4c82"/><ellipse cx="40.1" cy="31.75" rx="8.5" ry="4.9" transform="rotate(4 40.1 31.75)" fill="#5c4a7a" opacity="0.85"/><ellipse cx="35.1" cy="37.9" rx="6" ry="2.3" fill="#9a7a9a" opacity="0.8"/><path d="M29.1,27.3 L31.9,23.3 L31.7,27.3 Z M32.6,27.3 L35.4,24.1 L35.2,27.3 Z M36.1,27.3 L38.9,23.3 L38.7,27.3 Z M39.6,27.3 L42.4,24.1 L42.2,27.3 Z M43.1,27.3 L45.9,23.3 L45.7,27.3 Z " fill="#6a5a8a"/><polyline points="27.8,36.5 26.2,42.75 25,47.7" fill="none" stroke="#32224f" stroke-width="2.5" stroke-linecap="round" stroke-linejoin="round"/><ellipse cx="24.4" cy="48.5" rx="2.0" ry="1.2" fill="#261a40"/><polyline points="45.7,35.5 48.1,40.15 46.7,44.8" fill="none" stroke="#32224f" stroke-width="2.5" stroke-linecap="round" stroke-linejoin="round"/><ellipse cx="46.1" cy="45.7" rx="1.9" ry="1.2" fill="#261a40"/><ellipse cx="26.4" cy="46.1" rx="1.5" ry="1.0" fill="#261a40"/><ellipse cx="42.1" cy="44.1" rx="1.5" ry="1.0" fill="#261a40"/><ellipse cx="45.9" cy="35.2" rx="3.79" ry="5.04" fill="#6c4c82"/><path d="M21.1,21.05 L16.06,20.91 L9.94,23.93 L10.16,25.37 L15.34,25.95 L21.1,26.09 Z" fill="#8c7c82" stroke="#8c7c82" stroke-width="1" stroke-linejoin="round"/><path d="M19.7,20.9 L24.7,15.5 L25.1,22.3 Z" fill="#5a4a6a"/><circle cx="17.1" cy="22.7" r="0.9" fill="#221428" opacity="0.8"/></g></svg></div>
<div class="cell" style="left:239.6px;top:307.5px"><svg width="68.6" height="68.4" viewBox="0 0 68.6 68.4" style="left:0;top:0"><g transform="matrix(0.8856 0 0 0.9155 1.839 0.814) translate(2 2)" filter="url(#sb)"><path d="M45,28.22 Q49.4,30.1 51.7,33.1 Q48.9,32.42 45,31.64 Z" fill="#74447c"/><polyline points="30.2,37 28.8,44 27.6,50" fill="none" stroke="#4a1a50" stroke-width="2.25" stroke-linecap="round" stroke-linejoin="round"/><polyline points="44,37 43.3,43 42.5,48" fill="none" stroke="#4a1a50" stroke-width="2.25" stroke-linecap="round" stroke-linejoin="round"/><path d="M17,25.6 L21.6,20.6 L32.5,28 L29,36 L23.8,33.9 Z" fill="#74447c" stroke="#74447c" stroke-width="1" stroke-linejoin="round"/><path d="M23.5,28.4 C27.5,25.9 33.1,29.4 38.1,27.9 C42.1,25.4 46.7,25.4 48.7,30.4 C49.5,33.9 48.7,37.7 46.2,39.7 C42.7,37.7 38.1,36.2 34.1,37.5 C31.1,39.7 28.5,41.7 26.5,40.7 C23,36.7 22.5,31.9 23.5,28.4 Z" fill="#74447c"/><ellipse cx="40.1" cy="31.86" rx="8.5" ry="4.01" transform="rotate(4 40.1 31.86)" fill="#5e3674" opacity="0.85"/><path d="M32.1,28.7 L37.1,25.7 L41.6,23.5 L39.1,27.1 L37.1,29.1 Z" fill="#6a3a60"/><polyline points="27.8,36.5 26.2,45 25,52.2" fill="none" stroke="#5c2262" stroke-width="2.5" stroke-linecap="round" stroke-linejoin="round"/><ellipse cx="24.4" cy="53" rx="2.0" ry="1.2" fill="#4a1a50"/><polyline points="45.7,35.5 48.1,41.5 46.7,49.3" fill="none" stroke="#5c2262" stroke-width="2.5" stroke-linecap="round" stroke-linejoin="round"/><ellipse cx="46.1" cy="50.2" rx="1.9" ry="1.2" fill="#4a1a50"/><ellipse cx="26.4" cy="50.6" rx="1.5" ry="1.0" fill="#4a1a50"/><ellipse cx="42.1" cy="48.6" rx="1.5" ry="1.0" fill="#4a1a50"/><ellipse cx="45.9" cy="35.2" rx="3.29" ry="4.24" fill="#74447c"/><ellipse cx="16" cy="23" rx="6" ry="4.2" transform="rotate(-8 16 23)" fill="#522252"/><ellipse cx="11.8" cy="24" rx="2.6" ry="2.3" fill="#522252"/><path d="M18.2,20.4 L23.2,15 L23.6,21.8 Z" fill="#3a1840"/><path d="M10.2,22.4 L7.8,17 L12.2,21.2 Z" fill="#c0b0c0"/><circle cx="15.6" cy="22.2" r="0.9" fill="#221428" opacity="0.8"/></g></svg></div>
<div class="cell" style="left:314.3px;top:307.5px"><svg width="68.6" height="68.4" viewBox="0 0 68.6 68.4" style="left:0;top:0"><g transform="matrix(1.0137 0 0 0.9478 -2.158 -2.078) translate(-1 1.5)" filter="url(#sb)"><path d="M45,28.45 Q53.45,31.23 60.7,36.02 Q52.95,34.09 45,31.87 Z" fill="#5a5a68"/><polyline points="30.2,37 28.8,43.25 27.6,48.5" fill="none" stroke="#353048" stroke-width="2.25" stroke-linecap="round" stroke-linejoin="round"/><polyline points="44,37 43.3,42.25 42.5,46.5" fill="none" stroke="#353048" stroke-width="2.25" stroke-linecap="round" stroke-linejoin="round"/><path d="M17,27.1 L21.6,22.1 L32.5,28.45 L29,36 L23.8,33.6 Z" fill="#6a6e68" stroke="#6a6e68" stroke-width="1" stroke-linejoin="round"/><path d="M23.5,28.85 C27.5,26.35 33.1,29.85 38.1,28.35 C42.1,25.85 46.7,25.85 48.7,30.85 C49.5,34.35 48.7,37.17 46.2,39.17 C42.7,37.17 38.1,35.67 34.1,36.97 C31.1,39.17 28.5,41.17 26.5,40.17 C23,36.17 22.5,32.35 23.5,28.85 Z" fill="#6a6e68"/><ellipse cx="40.1" cy="31.9" rx="8.5" ry="3.68" transform="rotate(4 40.1 31.9)" fill="#62788a" opacity="0.85"/><ellipse cx="30.5" cy="31.55" rx="3.1" ry="2.6" fill="#92b242"/><polyline points="27.8,36.5 26.2,44.25 25,50.7" fill="none" stroke="#423c52" stroke-width="2.5" stroke-linecap="round" stroke-linejoin="round"/><ellipse cx="24.4" cy="51.5" rx="2.0" ry="1.2" fill="#353048"/><polyline points="45.7,35.5 48.1,41.05 46.7,47.8" fill="none" stroke="#423c52" stroke-width="2.5" stroke-linecap="round" stroke-linejoin="round"/><ellipse cx="46.1" cy="48.7" rx="1.9" ry="1.2" fill="#353048"/><ellipse cx="26.4" cy="49.1" rx="1.5" ry="1.0" fill="#353048"/><ellipse cx="42.1" cy="47.1" rx="1.5" ry="1.0" fill="#353048"/><ellipse cx="45.9" cy="35.2" rx="3.07" ry="3.91" fill="#6a6e68"/><ellipse cx="16" cy="24.5" rx="5.28" ry="4.16" transform="rotate(10 16 24.5)" fill="#6c6c7a"/><ellipse cx="12.48" cy="26.1" rx="2.48" ry="2.4" fill="#6c6c7a"/><ellipse cx="17.2" cy="22.42" rx="3.68" ry="1.6" transform="rotate(-10 16 24.5)" fill="#2a2838"/><circle cx="15.6" cy="23.7" r="0.9" fill="#221428" opacity="0.8"/></g></svg></div>
<div class="cell" style="left:389.0px;top:307.5px"><svg width="68.6" height="68.4" viewBox="0 0 68.6 68.4" style="left:0;top:0"><g transform="matrix(0.9766 0 0 1.0547 5.668 -4.785) translate(-3.5 3.5) translate(30 35) scale(0.92) translate(-30 -35)" filter="url(#sb)"><polyline points="30.2,37 28.8,43.25 27.6,48.5" fill="none" stroke="#181838" stroke-width="2.25" stroke-linecap="round" stroke-linejoin="round"/><polyline points="44,37 43.3,42.25 42.5,46.5" fill="none" stroke="#181838" stroke-width="2.25" stroke-linecap="round" stroke-linejoin="round"/><path d="M17,25.6 L21.6,20.6 L32.5,28.6 L29,36 L23.8,33.5 Z" fill="#6c8c9c" stroke="#6c8c9c" stroke-width="1" stroke-linejoin="round"/><path d="M23.5,29 C27.5,26.5 33.1,30 38.1,28.5 C42.1,26 46.7,26 48.7,31 C49.5,34.5 48.7,37 46.2,39 C42.7,37 38.1,35.5 34.1,36.8 C31.1,39 28.5,41 26.5,40 C23,36 22.5,32.5 23.5,29 Z" fill="#6c8c9c"/><ellipse cx="40.1" cy="31.91" rx="8.5" ry="3.57" transform="rotate(4 40.1 31.91)" fill="#5a8a8a" opacity="0.85"/><path d="M32.1,29.3 L37.1,26.3 L41.6,24.1 L39.1,27.7 L37.1,29.7 Z" fill="#7a9aa8"/><polyline points="27.8,36.5 26.2,44.25 25,50.7" fill="none" stroke="#222242" stroke-width="2.5" stroke-linecap="round" stroke-linejoin="round"/><ellipse cx="24.4" cy="51.5" rx="2.0" ry="1.2" fill="#181838"/><polyline points="45.7,35.5 48.1,41.05 46.7,47.8" fill="none" stroke="#222242" stroke-width="2.5" stroke-linecap="round" stroke-linejoin="round"/><ellipse cx="46.1" cy="48.7" rx="1.9" ry="1.2" fill="#181838"/><ellipse cx="26.4" cy="49.1" rx="1.5" ry="1.0" fill="#181838"/><ellipse cx="42.1" cy="47.1" rx="1.5" ry="1.0" fill="#181838"/><ellipse cx="45.9" cy="35.2" rx="3" ry="3.8" fill="#6c8c9c"/><ellipse cx="16" cy="23" rx="6" ry="4.2" transform="rotate(-8 16 23)" fill="#4c3262"/><ellipse cx="11.8" cy="24" rx="2.6" ry="2.3" fill="#4c3262"/><ellipse cx="20.2" cy="18" rx="3.6" ry="3.0" fill="#3a2050"/><path d="M10.2,22.4 L7.8,17 L12.2,21.2 Z" fill="#a0a0c0"/><circle cx="15.6" cy="22.2" r="0.9" fill="#221428" opacity="0.8"/></g></svg></div>
<div class="cell" style="left:463.6px;top:307.5px"><svg width="68.6" height="68.4" viewBox="0 0 68.6 68.4" style="left:0;top:0"><g transform="matrix(0.9999 0 0 1.0254 -0.039 -3.013) translate(-2.5 2)" filter="url(#sb)"><path d="M45,28.22 Q50.75,30.4 54.7,34 Q50.25,32.9 45,31.64 Z" fill="#8c6070"/><polyline points="30.2,37 28.8,42.75 27.6,47.5" fill="none" stroke="#3a2848" stroke-width="2.25" stroke-linecap="round" stroke-linejoin="round"/><polyline points="44,37 43.3,41.75 42.5,45.5" fill="none" stroke="#3a2848" stroke-width="2.25" stroke-linecap="round" stroke-linejoin="round"/><path d="M17,25.6 L21.6,20.6 L32.5,28 L29,36 L23.8,33.9 Z" fill="#8a7a7a" stroke="#8a7a7a" stroke-width="1" stroke-linejoin="round"/><path d="M23.5,28.4 C27.5,25.9 33.1,29.4 38.1,27.9 C42.1,25.4 46.7,25.4 48.7,30.4 C49.5,33.9 48.7,37.7 46.2,39.7 C42.7,37.7 38.1,36.2 34.1,37.5 C31.1,39.7 28.5,41.7 26.5,40.7 C23,36.7 22.5,31.9 23.5,28.4 Z" fill="#8c6070"/><ellipse cx="40.1" cy="31.86" rx="8.5" ry="4.01" transform="rotate(4 40.1 31.86)" fill="#86586c" opacity="0.85"/><path d="M29.1,28.5 L31.9,24.5 L31.7,28.5 Z M32.6,28.5 L35.4,25.3 L35.2,28.5 Z M36.1,28.5 L38.9,24.5 L38.7,28.5 Z M39.6,28.5 L42.4,25.3 L42.2,28.5 Z M43.1,28.5 L45.9,24.5 L45.7,28.5 Z " fill="#7a5a60"/><polyline points="27.8,36.5 26.2,43.75 25,49.7" fill="none" stroke="#4c3252" stroke-width="2.5" stroke-linecap="round" stroke-linejoin="round"/><ellipse cx="24.4" cy="50.5" rx="2.0" ry="1.2" fill="#3a2848"/><polyline points="45.7,35.5 48.1,40.75 46.7,46.8" fill="none" stroke="#4c3252" stroke-width="2.5" stroke-linecap="round" stroke-linejoin="round"/><ellipse cx="46.1" cy="47.7" rx="1.9" ry="1.2" fill="#3a2848"/><ellipse cx="26.4" cy="48.1" rx="1.5" ry="1.0" fill="#3a2848"/><ellipse cx="42.1" cy="46.1" rx="1.5" ry="1.0" fill="#3a2848"/><ellipse cx="45.9" cy="35.2" rx="3.29" ry="4.24" fill="#8c6070"/><ellipse cx="16" cy="23" rx="6.6" ry="5.2" transform="rotate(10 16 23)" fill="#8c7c7a"/><ellipse cx="11.6" cy="24.6" rx="3.1" ry="3" fill="#5a4a50"/><path d="M16.5,19.4 L19,12 L21,17 L23.4,13.4 L24.2,22.4 Z" fill="#2a2030"/><circle cx="15.6" cy="22.2" r="0.9" fill="#221428" opacity="0.8"/></g></svg></div>
<div class="cell" style="left:538.3px;top:307.5px"><svg width="68.6" height="68.4" viewBox="0 0 68.6 68.4" style="left:0;top:0"><g transform="matrix(0.9973 0 0 0.9868 -6.117 -2.377) translate(0.5 1)" filter="url(#sb)"><path d="M45,28.22 Q51.2,30.5 55.7,34.3 Q50.7,33.06 45,31.64 Z" fill="#6a3a70"/><polyline points="30.2,37 28.8,43.25 27.6,48.5" fill="none" stroke="#7a2048" stroke-width="2.25" stroke-linecap="round" stroke-linejoin="round"/><polyline points="44,37 43.3,42.25 42.5,46.5" fill="none" stroke="#7a2048" stroke-width="2.25" stroke-linecap="round" stroke-linejoin="round"/><path d="M18,25.1 L22.6,20.1 L32.5,28 L29,36 L24.6,33.9 Z" fill="#b07a6c" stroke="#b07a6c" stroke-width="1" stroke-linejoin="round"/><path d="M23.5,28.4 C27.5,25.9 33.1,29.4 38.1,27.9 C42.1,25.4 46.7,25.4 48.7,30.4 C49.5,33.9 48.7,37.7 46.2,39.7 C42.7,37.7 38.1,36.2 34.1,37.5 C31.1,39.7 28.5,41.7 26.5,40.7 C23,36.7 22.5,31.9 23.5,28.4 Z" fill="#8c5684"/><ellipse cx="40.1" cy="31.86" rx="8.5" ry="4.01" transform="rotate(4 40.1 31.86)" fill="#7a4a84" opacity="0.85"/><ellipse cx="30.5" cy="31.1" rx="3.1" ry="2.6" fill="#d23252"/><polyline points="27.8,36.5 26.2,44.25 25,50.7" fill="none" stroke="#8c2c52" stroke-width="2.5" stroke-linecap="round" stroke-linejoin="round"/><ellipse cx="24.4" cy="51.5" rx="2.0" ry="1.2" fill="#7a2048"/><polyline points="45.7,35.5 48.1,41.05 46.7,47.8" fill="none" stroke="#8c2c52" stroke-width="2.5" stroke-linecap="round" stroke-linejoin="round"/><ellipse cx="46.1" cy="48.7" rx="1.9" ry="1.2" fill="#7a2048"/><ellipse cx="26.4" cy="49.1" rx="1.5" ry="1.0" fill="#7a2048"/><ellipse cx="42.1" cy="47.1" rx="1.5" ry="1.0" fill="#7a2048"/><ellipse cx="45.9" cy="35.2" rx="3.29" ry="4.24" fill="#8c5684"/><path d="M20.9,19.85 L15.44,19.69 L8.81,22.97 L9.04,24.53 L14.66,25.15 L20.9,25.31 Z" fill="#c28c72" stroke="#c28c72" stroke-width="1" stroke-linejoin="round"/><path d="M19.2,19.9 L24.2,14.5 L24.6,21.3 Z" fill="#b07a60"/><circle cx="16.6" cy="21.7" r="0.9" fill="#221428" opacity="0.8"/></g></svg></div>
<div class="cell" style="left:613.0px;top:307.5px"><svg width="68.6" height="68.4" viewBox="0 0 68.6 68.4" style="left:0;top:0"><g transform="matrix(1.0190 0 0 0.9668 -3.229 -0.698) translate(0 1)" filter="url(#sb)"><path d="M45,28.22 Q51.65,30.6 56.7,34.6 Q51.15,33.22 45,31.64 Z" fill="#a23c52"/><polyline points="30.2,37 28.8,43.25 27.6,48.5" fill="none" stroke="#8a2040" stroke-width="2.25" stroke-linecap="round" stroke-linejoin="round"/><polyline points="44,37 43.3,42.25 42.5,46.5" fill="none" stroke="#8a2040" stroke-width="2.25" stroke-linecap="round" stroke-linejoin="round"/><path d="M20.5,24.6 L25.1,19.6 L32.5,28 L29,36 L23.8,33.9 Z" fill="#a23c52" stroke="#a23c52" stroke-width="1" stroke-linejoin="round"/><path d="M23.5,28.4 C27.5,25.9 33.1,29.4 38.1,27.9 C42.1,25.4 46.7,25.4 48.7,30.4 C49.5,33.9 48.7,37.7 46.2,39.7 C42.7,37.7 38.1,36.2 34.1,37.5 C31.1,39.7 28.5,41.7 26.5,40.7 C23,36.7 22.5,31.9 23.5,28.4 Z" fill="#a23c52"/><ellipse cx="40.1" cy="31.86" rx="8.5" ry="4.01" transform="rotate(4 40.1 31.86)" fill="#98384e" opacity="0.85"/><path d="M32.1,28.4 L34.6,23.3 L44.6,26.3 L46.1,29.3 L39.1,28.1 Z" fill="#7a1a38"/><polyline points="27.8,36.5 26.2,44.25 25,50.7" fill="none" stroke="#9c2c4a" stroke-width="2.5" stroke-linecap="round" stroke-linejoin="round"/><ellipse cx="24.4" cy="51.5" rx="2.0" ry="1.2" fill="#8a2040"/><polyline points="45.7,35.5 48.1,41.05 46.7,47.8" fill="none" stroke="#9c2c4a" stroke-width="2.5" stroke-linecap="round" stroke-linejoin="round"/><ellipse cx="46.1" cy="48.7" rx="1.9" ry="1.2" fill="#8a2040"/><ellipse cx="26.4" cy="49.1" rx="1.5" ry="1.0" fill="#8a2040"/><ellipse cx="42.1" cy="47.1" rx="1.5" ry="1.0" fill="#8a2040"/><ellipse cx="45.9" cy="35.2" rx="3.29" ry="4.24" fill="#a23c52"/><path d="M23.4,19.5 L18.72,19.04 L10.14,26.06 L17.16,24.65 L23.4,24.81 Z" fill="#c24c52" stroke="#c24c52" stroke-width="0.8" stroke-linejoin="round"/><path d="M17,18.6 L25.3,13 L26.9,21 Z" fill="#5a1a30"/><circle cx="19.1" cy="21.2" r="0.9" fill="#221428" opacity="0.8"/></g></svg></div>
<div class="cell" style="left:90.2px;top:382.1px"><svg width="68.6" height="68.4" viewBox="0 0 68.6 68.4" style="left:0;top:0"><g transform="matrix(0.9746 0 0 1.0367 0.892 -0.931) translate(-1 -0.5)" filter="url(#sb)"><path d="M45,28.15 Q52.1,30.63 57.7,34.83 Q51.6,33.31 45,31.57 Z" fill="#b22c92"/><polyline points="30.2,37 28.8,43.25 27.6,48.5" fill="none" stroke="#8a0a6c" stroke-width="2.25" stroke-linecap="round" stroke-linejoin="round"/><polyline points="44,37 43.3,42.25 42.5,46.5" fill="none" stroke="#8a0a6c" stroke-width="2.25" stroke-linecap="round" stroke-linejoin="round"/><path d="M16,25.1 L20.6,20.1 L32.5,27.85 L29,36 L23.8,34 Z" fill="#b22c92" stroke="#b22c92" stroke-width="1" stroke-linejoin="round"/><path d="M23.5,28.25 C27.5,25.75 33.1,29.25 38.1,27.75 C42.1,25.25 46.7,25.25 48.7,30.25 C49.5,33.75 48.7,37.88 46.2,39.88 C42.7,37.88 38.1,36.38 34.1,37.67 C31.1,39.88 28.5,41.88 26.5,40.88 C23,36.88 22.5,31.75 23.5,28.25 Z" fill="#b22c92"/><ellipse cx="40.1" cy="31.84" rx="8.5" ry="4.12" transform="rotate(4 40.1 31.84)" fill="#b03088" opacity="0.85"/><ellipse cx="35.1" cy="36.67" rx="6" ry="2.3" fill="#c06aa0" opacity="0.8"/><ellipse cx="30.5" cy="30.95" rx="3.1" ry="2.6" fill="#8a7a4a"/><polyline points="27.8,36.5 26.2,44.25 25,50.7" fill="none" stroke="#9c127c" stroke-width="2.5" stroke-linecap="round" stroke-linejoin="round"/><ellipse cx="24.4" cy="51.5" rx="2.0" ry="1.2" fill="#8a0a6c"/><polyline points="45.7,35.5 48.1,41.05 46.7,47.8" fill="none" stroke="#9c127c" stroke-width="2.5" stroke-linecap="round" stroke-linejoin="round"/><ellipse cx="46.1" cy="48.7" rx="1.9" ry="1.2" fill="#8a0a6c"/><ellipse cx="26.4" cy="49.1" rx="1.5" ry="1.0" fill="#8a0a6c"/><ellipse cx="42.1" cy="47.1" rx="1.5" ry="1.0" fill="#8a0a6c"/><ellipse cx="45.9" cy="35.2" rx="3.35" ry="4.34" fill="#b22c92"/><ellipse cx="15" cy="22.5" rx="6" ry="4.2" transform="rotate(-8 15 22.5)" fill="#b02c8c"/><ellipse cx="10.8" cy="23.5" rx="2.6" ry="2.3" fill="#b02c8c"/><ellipse cx="19.2" cy="17.5" rx="3.6" ry="3.0" fill="#2a0a2a"/><circle cx="14.6" cy="21.7" r="0.9" fill="#221428" opacity="0.8"/></g></svg></div>
<div class="cell" style="left:164.9px;top:382.1px"><svg width="68.6" height="68.4" viewBox="0 0 68.6 68.4" style="left:0;top:0"><g transform="matrix(0.9949 0 0 1.0141 -2.876 0.396) translate(-1 0)" filter="url(#sb)"><path d="M45,27.84 Q52.1,30.33 57.7,34.52 Q51.6,33.01 45,31.27 Z" fill="#9c3c72"/><polyline points="30.2,37 28.8,42.75 27.6,47.5" fill="none" stroke="#6a1454" stroke-width="2.25" stroke-linecap="round" stroke-linejoin="round"/><polyline points="44,37 43.3,41.75 42.5,45.5" fill="none" stroke="#6a1454" stroke-width="2.25" stroke-linecap="round" stroke-linejoin="round"/><path d="M17,24.6 L21.6,19.6 L32.5,27.25 L29,36 L23.8,34.4 Z" fill="#9c3c72" stroke="#9c3c72" stroke-width="1" stroke-linejoin="round"/><path d="M23.5,27.65 C27.5,25.15 33.1,28.65 38.1,27.15 C42.1,24.65 46.7,24.65 48.7,29.65 C49.5,33.15 48.7,38.58 46.2,40.58 C42.7,38.58 38.1,37.08 34.1,38.38 C31.1,40.58 28.5,42.58 26.5,41.58 C23,37.58 22.5,31.15 23.5,27.65 Z" fill="#9c3c72"/><ellipse cx="40.1" cy="31.79" rx="8.5" ry="4.56" transform="rotate(4 40.1 31.79)" fill="#8a2a62" opacity="0.85"/><ellipse cx="35.1" cy="37.38" rx="6" ry="2.3" fill="#b07a8a" opacity="0.8"/><polyline points="27.8,36.5 26.2,43.75 25,49.7" fill="none" stroke="#7c1c62" stroke-width="2.5" stroke-linecap="round" stroke-linejoin="round"/><ellipse cx="24.4" cy="50.5" rx="2.0" ry="1.2" fill="#6a1454"/><polyline points="45.7,35.5 48.1,40.75 46.7,46.8" fill="none" stroke="#7c1c62" stroke-width="2.5" stroke-linecap="round" stroke-linejoin="round"/><ellipse cx="46.1" cy="47.7" rx="1.9" ry="1.2" fill="#6a1454"/><ellipse cx="26.4" cy="48.1" rx="1.5" ry="1.0" fill="#6a1454"/><ellipse cx="42.1" cy="46.1" rx="1.5" ry="1.0" fill="#6a1454"/><ellipse cx="45.9" cy="35.2" rx="3.61" ry="4.75" fill="#9c3c72"/><ellipse cx="16" cy="22" rx="5.61" ry="4.42" transform="rotate(10 16 22)" fill="#a28282"/><ellipse cx="12.26" cy="23.6" rx="2.63" ry="2.55" fill="#7a5a62"/><path d="M17.6,18.6 L19.4,12.6 L20.2,18.4 Z M20.4,19 L24.6,14.4 L23,20 Z" fill="#b09a8a"/><circle cx="15.6" cy="21.2" r="0.9" fill="#221428" opacity="0.8"/></g></svg></div>
<div class="cell" style="left:239.6px;top:382.1px"><svg width="68.6" height="68.4" viewBox="0 0 68.6 68.4" style="left:0;top:0"><g transform="matrix(0.9289 0 0 1.0023 0.409 3.479) translate(2.5 1)" filter="url(#sb)"><polyline points="30.2,37 28.8,41.75 27.6,45.5" fill="none" stroke="#201850" stroke-width="2.25" stroke-linecap="round" stroke-linejoin="round"/><polyline points="44,37 43.3,40.75 42.5,43.5" fill="none" stroke="#201850" stroke-width="2.25" stroke-linecap="round" stroke-linejoin="round"/><path d="M17,25.6 L21.6,20.6 L32.5,26.65 L29,36 L23.8,34.8 Z" fill="#64588a" stroke="#64588a" stroke-width="1" stroke-linejoin="round"/><path d="M23.5,27.05 C27.5,24.55 33.1,28.05 38.1,26.55 C42.1,24.05 46.7,24.05 48.7,29.05 C49.5,32.55 48.7,39.27 46.2,41.27 C42.7,39.27 38.1,37.77 34.1,39.07 C31.1,41.27 28.5,43.27 26.5,42.27 C23,38.27 22.5,30.55 23.5,27.05 Z" fill="#64588a"/><ellipse cx="40.1" cy="31.73" rx="8.5" ry="5.01" transform="rotate(4 40.1 31.73)" fill="#5a4e84" opacity="0.85"/><ellipse cx="35.1" cy="38.07" rx="6" ry="2.3" fill="#7a6a90" opacity="0.8"/><path d="M32.1,27.05 L34.6,21.95 L44.6,24.95 L46.1,27.95 L39.1,26.75 Z" fill="#3a2a68"/><polyline points="27.8,36.5 26.2,42.75 25,47.7" fill="none" stroke="#2c2262" stroke-width="2.5" stroke-linecap="round" stroke-linejoin="round"/><ellipse cx="24.4" cy="48.5" rx="2.0" ry="1.2" fill="#201850"/><polyline points="45.7,35.5 48.1,40.15 46.7,44.8" fill="none" stroke="#2c2262" stroke-width="2.5" stroke-linecap="round" stroke-linejoin="round"/><ellipse cx="46.1" cy="45.7" rx="1.9" ry="1.2" fill="#201850"/><ellipse cx="26.4" cy="46.1" rx="1.5" ry="1.0" fill="#201850"/><ellipse cx="42.1" cy="44.1" rx="1.5" ry="1.0" fill="#201850"/><ellipse cx="45.9" cy="35.2" rx="3.85" ry="5.13" fill="#64588a"/><ellipse cx="16" cy="23" rx="5.28" ry="4.16" transform="rotate(10 16 23)" fill="#7c7c92"/><ellipse cx="12.48" cy="24.6" rx="2.48" ry="2.4" fill="#7c7c92"/><path d="M16.5,19.4 L19,12 L21,17 L23.4,13.4 L24.2,22.4 Z" fill="#2a2048"/><circle cx="15.6" cy="22.2" r="0.9" fill="#221428" opacity="0.8"/></g></svg></div>
<div class="cell" style="left:314.3px;top:382.1px"><svg width="68.6" height="68.4" viewBox="0 0 68.6 68.4" style="left:0;top:0"><g transform="matrix(1.0716 0 0 0.8646 -3.726 4.111) translate(1.5 1.5)" filter="url(#sb)"><polyline points="30.2,37 28.8,43.75 27.6,49.5" fill="none" stroke="#7a2838" stroke-width="2.25" stroke-linecap="round" stroke-linejoin="round"/><polyline points="44,37 43.3,42.75 42.5,47.5" fill="none" stroke="#7a2838" stroke-width="2.25" stroke-linecap="round" stroke-linejoin="round"/><path d="M20,25.1 L24.6,20.1 L32.5,28.3 L29,36 L23.8,33.7 Z" fill="#a24c4a" stroke="#a24c4a" stroke-width="1" stroke-linejoin="round"/><path d="M23.5,28.7 C27.5,26.2 33.1,29.7 38.1,28.2 C42.1,25.7 46.7,25.7 48.7,30.7 C49.5,34.2 48.7,37.35 46.2,39.35 C42.7,37.35 38.1,35.85 34.1,37.15 C31.1,39.35 28.5,41.35 26.5,40.35 C23,36.35 22.5,32.2 23.5,28.7 Z" fill="#a24c4a"/><ellipse cx="40.1" cy="31.88" rx="8.5" ry="3.79" transform="rotate(4 40.1 31.88)" fill="#984848" opacity="0.85"/><path d="M29.1,28.8 L31.9,24.8 L31.7,28.8 Z M32.6,28.8 L35.4,25.6 L35.2,28.8 Z M36.1,28.8 L38.9,24.8 L38.7,28.8 Z M39.6,28.8 L42.4,25.6 L42.2,28.8 Z M43.1,28.8 L45.9,24.8 L45.7,28.8 Z " fill="#8a3a40"/><polyline points="27.8,36.5 26.2,44.75 25,51.7" fill="none" stroke="#8c3242" stroke-width="2.5" stroke-linecap="round" stroke-linejoin="round"/><ellipse cx="24.4" cy="52.5" rx="2.0" ry="1.2" fill="#7a2838"/><polyline points="45.7,35.5 48.1,41.35 46.7,48.8" fill="none" stroke="#8c3242" stroke-width="2.5" stroke-linecap="round" stroke-linejoin="round"/><ellipse cx="46.1" cy="49.7" rx="1.9" ry="1.2" fill="#7a2838"/><ellipse cx="26.4" cy="50.1" rx="1.5" ry="1.0" fill="#7a2838"/><ellipse cx="42.1" cy="48.1" rx="1.5" ry="1.0" fill="#7a2838"/><ellipse cx="45.9" cy="35.2" rx="3.15" ry="4.02" fill="#a24c4a"/><path d="M22,20.46 L17.8,20.34 L12.7,22.86 L12.88,24.06 L17.2,24.54 L22,24.66 Z" fill="#a04a4a" stroke="#a04a4a" stroke-width="1" stroke-linejoin="round"/><path d="M20.6,19.1 L22.4,13.1 L23.2,18.9 Z M23.4,19.5 L27.6,14.9 L26,20.5 Z" fill="#5a2a30"/><path d="M15.52,21.9 L14.08,16.5 L16.72,20.7 Z" fill="#c0a090"/><circle cx="18.6" cy="21.7" r="0.9" fill="#221428" opacity="0.8"/></g></svg></div>
<div class="cell" style="left:389.0px;top:382.1px"><svg width="68.6" height="68.4" viewBox="0 0 68.6 68.4" style="left:0;top:0"><g transform="matrix(0.9494 0 0 1.0254 -0.989 -0.482) translate(-2 0)" filter="url(#sb)"><path d="M45,28.45 Q53,31.13 59.7,35.73 Q52.5,33.93 45,31.87 Z" fill="#b23c82"/><polyline points="30.2,37 28.8,41.5 27.6,45" fill="none" stroke="#900a58" stroke-width="2.25" stroke-linecap="round" stroke-linejoin="round"/><polyline points="44,37 43.3,40.5 42.5,43" fill="none" stroke="#900a58" stroke-width="2.25" stroke-linecap="round" stroke-linejoin="round"/><path d="M15.5,22.6 L20.1,17.6 L32.5,28.45 L29,36 L24.76,33.6 Z" fill="#b23c82" stroke="#b23c82" stroke-width="1" stroke-linejoin="round"/><path d="M23.5,28.85 C27.5,26.35 33.1,29.85 38.1,28.35 C42.1,25.85 46.7,25.85 48.7,30.85 C49.5,34.35 48.7,37.17 46.2,39.17 C42.7,37.17 38.1,35.67 34.1,36.97 C31.1,39.17 28.5,41.17 26.5,40.17 C23,36.17 22.5,32.35 23.5,28.85 Z" fill="#b23c82"/><ellipse cx="40.1" cy="31.9" rx="8.5" ry="3.68" transform="rotate(4 40.1 31.9)" fill="#b03a78" opacity="0.85"/><polyline points="27.8,36.5 26.2,42.5 25,47.2" fill="none" stroke="#a21262" stroke-width="2.5" stroke-linecap="round" stroke-linejoin="round"/><ellipse cx="24.4" cy="48" rx="2.0" ry="1.2" fill="#900a58"/><polyline points="45.7,35.5 48.1,40 46.7,44.3" fill="none" stroke="#a21262" stroke-width="2.5" stroke-linecap="round" stroke-linejoin="round"/><ellipse cx="46.1" cy="45.2" rx="1.9" ry="1.2" fill="#900a58"/><ellipse cx="26.4" cy="45.6" rx="1.5" ry="1.0" fill="#900a58"/><ellipse cx="42.1" cy="43.6" rx="1.5" ry="1.0" fill="#900a58"/><ellipse cx="45.9" cy="35.2" rx="3.07" ry="3.91" fill="#b23c82"/><path d="M18.5,17.28 L12.9,17.12 L6.1,20.48 L6.34,22.08 L12.1,22.72 L18.5,22.88 Z" fill="#c23262" stroke="#c23262" stroke-width="1" stroke-linejoin="round"/><circle cx="14.1" cy="19.2" r="0.9" fill="#221428" opacity="0.8"/></g></svg></div>
<div class="cell" style="left:463.6px;top:382.1px"><svg width="68.6" height="68.4" viewBox="0 0 68.6 68.4" style="left:0;top:0"><g transform="matrix(0.9881 0 0 0.9375 -3.036 5.720) translate(0.5 -1)" filter="url(#sb)"><path d="M45,27.55 Q53.45,30.33 60.7,35.12 Q52.95,33.19 45,30.96 Z" fill="#6a7058"/><polyline points="30.2,37 28.8,41.75 27.6,45.5" fill="none" stroke="#262648" stroke-width="2.25" stroke-linecap="round" stroke-linejoin="round"/><polyline points="44,37 43.3,40.75 42.5,43.5" fill="none" stroke="#262648" stroke-width="2.25" stroke-linecap="round" stroke-linejoin="round"/><path d="M17,25.6 L21.6,20.6 L32.5,26.65 L29,36 L23.8,34.8 Z" fill="#7c8262" stroke="#7c8262" stroke-width="1" stroke-linejoin="round"/><path d="M23.5,27.05 C27.5,24.55 33.1,28.05 38.1,26.55 C42.1,24.05 46.7,24.05 48.7,29.05 C49.5,32.55 48.7,39.27 46.2,41.27 C42.7,39.27 38.1,37.77 34.1,39.07 C31.1,41.27 28.5,43.27 26.5,42.27 C23,38.27 22.5,30.55 23.5,27.05 Z" fill="#7c8262"/><ellipse cx="40.1" cy="31.73" rx="8.5" ry="5.01" transform="rotate(4 40.1 31.73)" fill="#74785e" opacity="0.85"/><ellipse cx="35.1" cy="38.07" rx="6" ry="2.3" fill="#9a7a88" opacity="0.8"/><polyline points="27.8,36.5 26.2,42.75 25,47.7" fill="none" stroke="#323252" stroke-width="2.5" stroke-linecap="round" stroke-linejoin="round"/><ellipse cx="24.4" cy="48.5" rx="2.0" ry="1.2" fill="#262648"/><polyline points="45.7,35.5 48.1,40.15 46.7,44.8" fill="none" stroke="#323252" stroke-width="2.5" stroke-linecap="round" stroke-linejoin="round"/><ellipse cx="46.1" cy="45.7" rx="1.9" ry="1.2" fill="#262648"/><ellipse cx="26.4" cy="46.1" rx="1.5" ry="1.0" fill="#262648"/><ellipse cx="42.1" cy="44.1" rx="1.5" ry="1.0" fill="#262648"/><ellipse cx="45.9" cy="35.2" rx="3.85" ry="5.13" fill="#7c8262"/><ellipse cx="16" cy="23" rx="5.28" ry="4.16" transform="rotate(10 16 23)" fill="#5c5c62"/><ellipse cx="12.48" cy="24.6" rx="2.48" ry="2.4" fill="#5c5c62"/><path d="M18.2,20.4 L23.2,15 L23.6,21.8 Z" fill="#4a4a50"/><ellipse cx="17.2" cy="20.92" rx="3.68" ry="1.6" transform="rotate(-10 16 23)" fill="#2a2a38"/><circle cx="15.6" cy="22.2" r="0.9" fill="#221428" opacity="0.8"/></g></svg></div>
<div class="cell" style="left:538.3px;top:382.1px"><svg width="68.6" height="68.4" viewBox="0 0 68.6 68.4" style="left:0;top:0"><g transform="matrix(0.9277 0 0 0.8864 -0.238 4.365) translate(1 1.5)" filter="url(#sb)"><path d="M45,28.37 Q51.65,30.75 56.7,34.75 Q51.15,33.37 45,31.79 Z" fill="#6a5a68"/><polyline points="30.2,37 28.8,43.25 27.6,48.5" fill="none" stroke="#2e2848" stroke-width="2.25" stroke-linecap="round" stroke-linejoin="round"/><polyline points="44,37 43.3,42.25 42.5,46.5" fill="none" stroke="#2e2848" stroke-width="2.25" stroke-linecap="round" stroke-linejoin="round"/><path d="M17,25.6 L21.6,20.6 L32.5,28.3 L29,36 L23.8,33.7 Z" fill="#7c6c7a" stroke="#7c6c7a" stroke-width="1" stroke-linejoin="round"/><path d="M23.5,28.7 C27.5,26.2 33.1,29.7 38.1,28.2 C42.1,25.7 46.7,25.7 48.7,30.7 C49.5,34.2 48.7,37.35 46.2,39.35 C42.7,37.35 38.1,35.85 34.1,37.15 C31.1,39.35 28.5,41.35 26.5,40.35 C23,36.35 22.5,32.2 23.5,28.7 Z" fill="#7c6c7a"/><ellipse cx="40.1" cy="31.88" rx="8.5" ry="3.79" transform="rotate(4 40.1 31.88)" fill="#6c6472" opacity="0.85"/><ellipse cx="30.5" cy="31.4" rx="3.1" ry="2.6" fill="#42b2a2"/><polyline points="27.8,36.5 26.2,44.25 25,50.7" fill="none" stroke="#3c3252" stroke-width="2.5" stroke-linecap="round" stroke-linejoin="round"/><ellipse cx="24.4" cy="51.5" rx="2.0" ry="1.2" fill="#2e2848"/><polyline points="45.7,35.5 48.1,41.05 46.7,47.8" fill="none" stroke="#3c3252" stroke-width="2.5" stroke-linecap="round" stroke-linejoin="round"/><ellipse cx="46.1" cy="48.7" rx="1.9" ry="1.2" fill="#2e2848"/><ellipse cx="26.4" cy="49.1" rx="1.5" ry="1.0" fill="#2e2848"/><ellipse cx="42.1" cy="47.1" rx="1.5" ry="1.0" fill="#2e2848"/><ellipse cx="45.9" cy="35.2" rx="3.15" ry="4.02" fill="#7c6c7a"/><ellipse cx="16" cy="23" rx="6" ry="4.2" transform="rotate(-8 16 23)" fill="#3a2c58"/><ellipse cx="11.8" cy="24" rx="2.6" ry="2.3" fill="#3a2c58"/><ellipse cx="20.2" cy="18" rx="3.6" ry="3.0" fill="#1e1a40"/><path d="M10.2,22.4 L7.8,17 L12.2,21.2 Z" fill="#b0b0c8"/><circle cx="15.6" cy="22.2" r="0.9" fill="#221428" opacity="0.8"/></g></svg></div>
<div class="cell" style="left:613.0px;top:382.1px"><svg width="68.6" height="68.4" viewBox="0 0 68.6 68.4" style="left:0;top:0"><g transform="matrix(0.9375 0 0 0.8643 -1.066 5.259) translate(1 0)" filter="url(#sb)"><path d="M45,28.45 Q51.65,30.83 56.7,34.83 Q51.15,33.45 45,31.87 Z" fill="#aa3c4a"/><polyline points="30.2,37 28.8,43.25 27.6,48.5" fill="none" stroke="#7a1a38" stroke-width="2.25" stroke-linecap="round" stroke-linejoin="round"/><polyline points="44,37 43.3,42.25 42.5,46.5" fill="none" stroke="#7a1a38" stroke-width="2.25" stroke-linecap="round" stroke-linejoin="round"/><path d="M20.5,24.6 L25.1,19.6 L32.5,28.45 L29,36 L23.8,33.6 Z" fill="#aa3c4a" stroke="#aa3c4a" stroke-width="1" stroke-linejoin="round"/><path d="M23.5,28.85 C27.5,26.35 33.1,29.85 38.1,28.35 C42.1,25.85 46.7,25.85 48.7,30.85 C49.5,34.35 48.7,37.17 46.2,39.17 C42.7,37.17 38.1,35.67 34.1,36.97 C31.1,39.17 28.5,41.17 26.5,40.17 C23,36.17 22.5,32.35 23.5,28.85 Z" fill="#aa3c4a"/><ellipse cx="40.1" cy="31.9" rx="8.5" ry="3.68" transform="rotate(4 40.1 31.9)" fill="#a03846" opacity="0.85"/><path d="M29.1,28.95 L31.9,24.95 L31.7,28.95 Z M32.6,28.95 L35.4,25.75 L35.2,28.95 Z M36.1,28.95 L38.9,24.95 L38.7,28.95 Z M39.6,28.95 L42.4,25.75 L42.2,28.95 Z M43.1,28.95 L45.9,24.95 L45.7,28.95 Z " fill="#8a2a38"/><polyline points="27.8,36.5 26.2,44.25 25,50.7" fill="none" stroke="#8c2242" stroke-width="2.5" stroke-linecap="round" stroke-linejoin="round"/><ellipse cx="24.4" cy="51.5" rx="2.0" ry="1.2" fill="#7a1a38"/><polyline points="45.7,35.5 48.1,41.05 46.7,47.8" fill="none" stroke="#8c2242" stroke-width="2.5" stroke-linecap="round" stroke-linejoin="round"/><ellipse cx="46.1" cy="48.7" rx="1.9" ry="1.2" fill="#7a1a38"/><ellipse cx="26.4" cy="49.1" rx="1.5" ry="1.0" fill="#7a1a38"/><ellipse cx="42.1" cy="47.1" rx="1.5" ry="1.0" fill="#7a1a38"/><ellipse cx="45.9" cy="35.2" rx="3.07" ry="3.91" fill="#aa3c4a"/><path d="M23,19.76 L18.8,19.34 L11.1,25.64 L17.4,24.38 L23,24.52 Z" fill="#b2444c" stroke="#b2444c" stroke-width="0.8" stroke-linejoin="round"/><path d="M21.1,18.6 L22.9,12.6 L23.7,18.4 Z M23.9,19 L28.1,14.4 L26.5,20 Z" fill="#8a2030"/><circle cx="19.1" cy="21.2" r="0.9" fill="#221428" opacity="0.8"/></g></svg></div>
<div class="cell" style="left:90.2px;top:456.7px"><svg width="68.6" height="68.4" viewBox="0 0 68.6 68.4" style="left:0;top:0"><g transform="matrix(0.9478 0 0 0.9739 1.435 -1.308) translate(-1.5 1.5)" filter="url(#sb)"><path d="M45,28.45 Q53,31.13 59.7,35.73 Q52.5,33.93 45,31.87 Z" fill="#b23c5a"/><polyline points="30.2,37 28.8,43.25 27.6,48.5" fill="none" stroke="#7a1240" stroke-width="2.25" stroke-linecap="round" stroke-linejoin="round"/><polyline points="44,37 43.3,42.25 42.5,46.5" fill="none" stroke="#7a1240" stroke-width="2.25" stroke-linecap="round" stroke-linejoin="round"/><path d="M16.5,27.1 L21.1,22.1 L32.5,28.45 L29,36 L23.8,33.6 Z" fill="#b23c5a" stroke="#b23c5a" stroke-width="1" stroke-linejoin="round"/><path d="M23.5,28.85 C27.5,26.35 33.1,29.85 38.1,28.35 C42.1,25.85 46.7,25.85 48.7,30.85 C49.5,34.35 48.7,37.17 46.2,39.17 C42.7,37.17 38.1,35.67 34.1,36.97 C31.1,39.17 28.5,41.17 26.5,40.17 C23,36.17 22.5,32.35 23.5,28.85 Z" fill="#b23c5a"/><ellipse cx="40.1" cy="31.9" rx="8.5" ry="3.68" transform="rotate(4 40.1 31.9)" fill="#a83856" opacity="0.85"/><ellipse cx="30.5" cy="31.55" rx="3.1" ry="2.6" fill="#d28a42"/><polyline points="27.8,36.5 26.2,44.25 25,50.7" fill="none" stroke="#8c1a4a" stroke-width="2.5" stroke-linecap="round" stroke-linejoin="round"/><ellipse cx="24.4" cy="51.5" rx="2.0" ry="1.2" fill="#7a1240"/><polyline points="45.7,35.5 48.1,41.05 46.7,47.8" fill="none" stroke="#8c1a4a" stroke-width="2.5" stroke-linecap="round" stroke-linejoin="round"/><ellipse cx="46.1" cy="48.7" rx="1.9" ry="1.2" fill="#7a1240"/><ellipse cx="26.4" cy="49.1" rx="1.5" ry="1.0" fill="#7a1240"/><ellipse cx="42.1" cy="47.1" rx="1.5" ry="1.0" fill="#7a1240"/><ellipse cx="45.9" cy="35.2" rx="3.07" ry="3.91" fill="#b23c5a"/><ellipse cx="15.5" cy="24.5" rx="6" ry="4.2" transform="rotate(-8 15.5 24.5)" fill="#4c2242"/><ellipse cx="11.3" cy="25.5" rx="2.6" ry="2.3" fill="#4c2242"/><ellipse cx="19.7" cy="19.5" rx="3.6" ry="3.0" fill="#4a4438"/><path d="M9.7,23.9 L7.3,18.5 L11.7,22.7 Z" fill="#c0a0a0"/><circle cx="15.1" cy="23.7" r="0.9" fill="#221428" opacity="0.8"/></g></svg></div>
<div class="cell" style="left:164.9px;top:456.7px"><svg width="68.6" height="68.4" viewBox="0 0 68.6 68.4" style="left:0;top:0"><g transform="matrix(1.0053 0 0 1.0032 -2.082 -3.806) translate(-1.5 2)" filter="url(#sb)"><path d="M45,28.37 Q53.45,31.15 60.7,35.95 Q52.95,34.01 45,31.79 Z" fill="#74746c"/><polyline points="30.2,37 28.8,43.25 27.6,48.5" fill="none" stroke="#4a4a38" stroke-width="2.25" stroke-linecap="round" stroke-linejoin="round"/><polyline points="44,37 43.3,42.25 42.5,46.5" fill="none" stroke="#4a4a38" stroke-width="2.25" stroke-linecap="round" stroke-linejoin="round"/><path d="M17,27.1 L21.6,22.1 L32.5,28.3 L29,36 L23.8,33.7 Z" fill="#9c9c52" stroke="#9c9c52" stroke-width="1" stroke-linejoin="round"/><path d="M23.5,28.7 C27.5,26.2 33.1,29.7 38.1,28.2 C42.1,25.7 46.7,25.7 48.7,30.7 C49.5,34.2 48.7,37.35 46.2,39.35 C42.7,37.35 38.1,35.85 34.1,37.15 C31.1,39.35 28.5,41.35 26.5,40.35 C23,36.35 22.5,32.2 23.5,28.7 Z" fill="#9c9c52"/><ellipse cx="40.1" cy="31.88" rx="8.5" ry="3.79" transform="rotate(4 40.1 31.88)" fill="#80807a" opacity="0.85"/><ellipse cx="30.5" cy="31.4" rx="3.1" ry="2.6" fill="#d23242"/><polyline points="27.8,36.5 26.2,44.25 25,50.7" fill="none" stroke="#5c5c42" stroke-width="2.5" stroke-linecap="round" stroke-linejoin="round"/><ellipse cx="24.4" cy="51.5" rx="2.0" ry="1.2" fill="#4a4a38"/><polyline points="45.7,35.5 48.1,41.05 46.7,47.8" fill="none" stroke="#5c5c42" stroke-width="2.5" stroke-linecap="round" stroke-linejoin="round"/><ellipse cx="46.1" cy="48.7" rx="1.9" ry="1.2" fill="#4a4a38"/><ellipse cx="26.4" cy="49.1" rx="1.5" ry="1.0" fill="#4a4a38"/><ellipse cx="42.1" cy="47.1" rx="1.5" ry="1.0" fill="#4a4a38"/><ellipse cx="45.9" cy="35.2" rx="3.15" ry="4.02" fill="#9c9c52"/><ellipse cx="16" cy="24.5" rx="5.41" ry="4.26" transform="rotate(10 16 24.5)" fill="#9a9a54"/><ellipse cx="12.39" cy="26.1" rx="2.54" ry="2.46" fill="#9a9a54"/><ellipse cx="17.2" cy="22.37" rx="3.77" ry="1.64" transform="rotate(-10 16 24.5)" fill="#6a6a38"/><circle cx="15.6" cy="23.7" r="0.9" fill="#221428" opacity="0.8"/></g></svg></div>
<div class="cell" style="left:239.6px;top:456.7px"><svg width="68.6" height="68.4" viewBox="0 0 68.6 68.4" style="left:0;top:0"><g transform="matrix(0.9973 0 0 1.0210 -1.431 -5.373) translate(-1 2)" filter="url(#sb)"><path d="M45,28.3 Q51.65,30.68 56.7,34.68 Q51.15,33.29 45,31.71 Z" fill="#a28c52"/><polyline points="30.2,37 28.8,43.25 27.6,48.5" fill="none" stroke="#4a4038" stroke-width="2.25" stroke-linecap="round" stroke-linejoin="round"/><polyline points="44,37 43.3,42.25 42.5,46.5" fill="none" stroke="#4a4038" stroke-width="2.25" stroke-linecap="round" stroke-linejoin="round"/><path d="M17,27.1 L21.6,22.1 L32.5,28.15 L29,36 L23.8,33.8 Z" fill="#a28c52" stroke="#a28c52" stroke-width="1" stroke-linejoin="round"/><path d="M23.5,28.55 C27.5,26.05 33.1,29.55 38.1,28.05 C42.1,25.55 46.7,25.55 48.7,30.55 C49.5,34.05 48.7,37.52 46.2,39.52 C42.7,37.52 38.1,36.02 34.1,37.32 C31.1,39.52 28.5,41.52 26.5,40.52 C23,36.52 22.5,32.05 23.5,28.55 Z" fill="#a28c52"/><ellipse cx="40.1" cy="31.87" rx="8.5" ry="3.9" transform="rotate(4 40.1 31.87)" fill="#94804e" opacity="0.85"/><polyline points="27.8,36.5 26.2,44.25 25,50.7" fill="none" stroke="#6c5c42" stroke-width="2.5" stroke-linecap="round" stroke-linejoin="round"/><ellipse cx="24.4" cy="51.5" rx="2.0" ry="1.2" fill="#4a4038"/><polyline points="45.7,35.5 48.1,41.05 46.7,47.8" fill="none" stroke="#6c5c42" stroke-width="2.5" stroke-linecap="round" stroke-linejoin="round"/><ellipse cx="46.1" cy="48.7" rx="1.9" ry="1.2" fill="#4a4038"/><ellipse cx="26.4" cy="49.1" rx="1.5" ry="1.0" fill="#4a4038"/><ellipse cx="42.1" cy="47.1" rx="1.5" ry="1.0" fill="#4a4038"/><ellipse cx="45.9" cy="35.2" rx="3.22" ry="4.13" fill="#a28c52"/><ellipse cx="16" cy="24.5" rx="5.61" ry="4.42" transform="rotate(10 16 24.5)" fill="#a88c58"/><ellipse cx="12.26" cy="26.1" rx="2.63" ry="2.55" fill="#a88c58"/><ellipse cx="17.2" cy="22.29" rx="3.91" ry="1.7" transform="rotate(-10 16 24.5)" fill="#3a2a28"/><circle cx="15.6" cy="23.7" r="0.9" fill="#221428" opacity="0.8"/></g></svg></div>
<div class="cell" style="left:314.3px;top:456.7px"><svg width="68.6" height="68.4" viewBox="0 0 68.6 68.4" style="left:0;top:0"><g transform="matrix(1.0137 0 0 0.9009 -5.674 1.852) translate(-0.5 1.5)" filter="url(#sb)"><path d="M45,28.37 Q53,31.05 59.7,35.65 Q52.5,33.85 45,31.79 Z" fill="#b82c5a"/><polyline points="30.2,37 28.8,43.25 27.6,48.5" fill="none" stroke="#901448" stroke-width="2.25" stroke-linecap="round" stroke-linejoin="round"/><polyline points="44,37 43.3,42.25 42.5,46.5" fill="none" stroke="#901448" stroke-width="2.25" stroke-linecap="round" stroke-linejoin="round"/><path d="M20.5,25.6 L25.1,20.6 L32.5,28.3 L29,36 L23.8,33.7 Z" fill="#b82c5a" stroke="#b82c5a" stroke-width="1" stroke-linejoin="round"/><path d="M23.5,28.7 C27.5,26.2 33.1,29.7 38.1,28.2 C42.1,25.7 46.7,25.7 48.7,30.7 C49.5,34.2 48.7,37.35 46.2,39.35 C42.7,37.35 38.1,35.85 34.1,37.15 C31.1,39.35 28.5,41.35 26.5,40.35 C23,36.35 22.5,32.2 23.5,28.7 Z" fill="#b82c5a"/><ellipse cx="40.1" cy="31.88" rx="8.5" ry="3.79" transform="rotate(4 40.1 31.88)" fill="#b02a56" opacity="0.85"/><ellipse cx="30.5" cy="31.4" rx="3.1" ry="2.6" fill="#c2b242"/><polyline points="27.8,36.5 26.2,44.25 25,50.7" fill="none" stroke="#a21c52" stroke-width="2.5" stroke-linecap="round" stroke-linejoin="round"/><ellipse cx="24.4" cy="51.5" rx="2.0" ry="1.2" fill="#901448"/><polyline points="45.7,35.5 48.1,41.05 46.7,47.8" fill="none" stroke="#a21c52" stroke-width="2.5" stroke-linecap="round" stroke-linejoin="round"/><ellipse cx="46.1" cy="48.7" rx="1.9" ry="1.2" fill="#901448"/><ellipse cx="26.4" cy="49.1" rx="1.5" ry="1.0" fill="#901448"/><ellipse cx="42.1" cy="47.1" rx="1.5" ry="1.0" fill="#901448"/><ellipse cx="45.9" cy="35.2" rx="3.15" ry="4.02" fill="#b82c5a"/><path d="M23.5,20.44 L18.7,19.96 L9.9,27.16 L17.1,25.72 L23.5,25.88 Z" fill="#c23a5a" stroke="#c23a5a" stroke-width="0.8" stroke-linejoin="round"/><path d="M17,19.6 L25.3,14 L26.9,22 Z" fill="#3a1a30"/><circle cx="19.1" cy="22.2" r="0.9" fill="#221428" opacity="0.8"/></g></svg></div>
<div class="cell" style="left:389.0px;top:456.7px"><svg width="68.6" height="68.4" viewBox="0 0 68.6 68.4" style="left:0;top:0"><g transform="matrix(1.0575 0 0 1.2035 -0.563 -7.759) translate(-2 2.5)" filter="url(#sb)"><polyline points="30.2,37 28.8,41.25 27.6,44.5" fill="none" stroke="#3a1a48" stroke-width="2.25" stroke-linecap="round" stroke-linejoin="round"/><polyline points="44,37 43.3,40.25 42.5,42.5" fill="none" stroke="#3a1a48" stroke-width="2.25" stroke-linecap="round" stroke-linejoin="round"/><path d="M17,25.6 L21.6,20.6 L32.5,26.2 L29,36 L23.8,35.1 Z" fill="#96688a" stroke="#96688a" stroke-width="1" stroke-linejoin="round"/><path d="M23.5,26.6 C27.5,24.1 33.1,27.6 38.1,26.1 C42.1,23.6 46.7,23.6 48.7,28.6 C49.5,32.1 48.7,39.8 46.2,41.8 C42.7,39.8 38.1,38.3 34.1,39.6 C31.1,41.8 28.5,43.8 26.5,42.8 C23,38.8 22.5,30.1 23.5,26.6 Z" fill="#96688a"/><ellipse cx="40.1" cy="31.69" rx="8.5" ry="5.34" transform="rotate(4 40.1 31.69)" fill="#6e4a80" opacity="0.85"/><ellipse cx="35.1" cy="38.6" rx="6" ry="2.3" fill="#a07a90" opacity="0.8"/><polyline points="27.8,36.5 26.2,42.25 25,46.7" fill="none" stroke="#5c2c62" stroke-width="2.5" stroke-linecap="round" stroke-linejoin="round"/><ellipse cx="24.4" cy="47.5" rx="2.0" ry="1.2" fill="#3a1a48"/><polyline points="45.7,35.5 48.1,39.85 46.7,43.8" fill="none" stroke="#5c2c62" stroke-width="2.5" stroke-linecap="round" stroke-linejoin="round"/><ellipse cx="46.1" cy="44.7" rx="1.9" ry="1.2" fill="#3a1a48"/><ellipse cx="26.4" cy="45.1" rx="1.5" ry="1.0" fill="#3a1a48"/><ellipse cx="42.1" cy="43.1" rx="1.5" ry="1.0" fill="#3a1a48"/><ellipse cx="45.9" cy="35.2" rx="4.02" ry="5.41" fill="#8a5a84"/><ellipse cx="16" cy="23" rx="5.94" ry="4.68" transform="rotate(10 16 23)" fill="#9c8282"/><ellipse cx="12.04" cy="24.6" rx="2.79" ry="2.7" fill="#6a5a62"/><path d="M16.5,19.4 L19,12 L21,17 L23.4,13.4 L24.2,22.4 Z" fill="#2e2244"/><circle cx="15.6" cy="22.2" r="0.9" fill="#221428" opacity="0.8"/></g></svg></div>
<div style="left:395px;top:541.2px;width:234px;height:31.4px;border-radius:3.5px;background:linear-gradient(#2b2b2b,#242424 30%,#151515 52%,#0c0c0c 75%,#141414);box-shadow:0 0 1.5px 0.5px #3a3a3acc;"></div><svg width="1024" height="640" viewBox="0 0 1024 640" style="left:0;top:0"><g filter="url(#sb)"><path d="M401,551.5 h1.6 l2.6,-2.2 v6.6 l-2.6,-2.2 h-1.6 Z" fill="#e6e6e6"/><path d="M406.3,551 q1,1.6 0,3.2" stroke="#cfcfcf" stroke-width="0.7" fill="none"/><rect x="410" y="551.8" width="21" height="1.4" rx="0.7" fill="#0a0a0a" opacity="0.6"/><circle cx="433.4" cy="552.6" r="2.6" fill="#8c8c8c"/><path d="M439.6,551.3 h1.8 l3,-2.6 v7.6 l-3,-2.6 h-1.8 Z" fill="#e6e6e6"/><path d="M445.6,550.2 q1.5,2.4 0,4.8 M447.2,549 q2.3,3.6 0,7.2" stroke="#d8d8d8" stroke-width="0.8" fill="none"/><path d="M481.4,552.7 L489,548.7 V556.7 Z M488.6,552.7 L496.2,548.7 V556.7 Z" fill="#e9e9e9"/><path d="M510.6,546.4 L523.5,552.8 L510.6,559.2 Z" fill="#f0f0f0"/><path d="M532.8,548.7 L540.4,552.7 L532.8,556.7 Z M539.8,548.7 L547.4,552.7 L539.8,556.7 Z" fill="#e9e9e9"/><rect x="593.2" y="551" width="8.8" height="3.6" rx="0.8" fill="#e6e6e6"/><path d="M596,550.2 L597.6,548.4 L599.2,550.2 Z M596,555.4 L597.6,557.2 L599.2,555.4 Z" fill="#dcdcdc"/><path d="M616.2,550.4 H613.2 V556.2 H619.6 V553.8" stroke="#e2e2e2" stroke-width="1.1" fill="none"/><path d="M615.2,554 Q615.6,550.6 619,550.4 V548.6 L622,551.2 L619,553.8 V552.2 Q616.6,552.2 615.2,554 Z" fill="#e6e6e6"/></g><rect x="419" y="564.3" width="183" height="1.4" fill="#050505" opacity="0.7"/><path d="M534.2,562.1 L536.9,564.8 L534.2,567.5 L531.5,564.8 Z" fill="#a2a2a2" filter="url(#sb)"/></svg><div class="t" style="left:399.4px;top:560.4px;font-size:6.4px;line-height:9px;color:#c8c8c8;filter:blur(0.35px)">04:49</div><div class="t" style="left:604.6px;top:560.4px;font-size:6.4px;line-height:9px;color:#c8c8c8;filter:blur(0.35px)">-02:53</div>
<div class="pb" style="left:736px;top:48px;width:286.4px;height:536.6px;background:#575757;border-left:1px solid #474747"></div><div class="hdg" style="left:736px;top:48px;width:286.4px;"><div class="t" style="transform:scaleX(0.865);">Model View&nbsp; [Model Info]</div></div><div class="dotg" style="left:1001px;top:51.3px"></div><div class="red" style="left:1011.9px;top:51.6px;background:#8c1c1c"></div><div style="left:740.4px;top:69.2px;width:273.4px;height:273.2px;background:linear-gradient(135deg,#4a4a48 49%,#2a2a24 51%)"></div><div style="left:741px;top:69.8px;width:272px;height:271.8px;background:#feffe5;overflow:hidden"><svg width="272" height="271.8" viewBox="741.0 69.8 272 271.8" style="left:0;top:0"><defs><linearGradient id="gb" x1="0" y1="0" x2="0" y2="1"><stop offset="0" stop-color="#ac4e5c"/><stop offset="0.6" stop-color="#a04658"/><stop offset="1" stop-color="#923852"/></linearGradient><linearGradient id="gc" x1="0" y1="0" x2="1" y2="0"><stop offset="0" stop-color="#2a1630"/><stop offset="0.55" stop-color="#3a2a38"/><stop offset="0.85" stop-color="#46583a"/><stop offset="1" stop-color="#557544"/></linearGradient><linearGradient id="gl" x1="0" y1="0" x2="0" y2="1"><stop offset="0" stop-color="#8a2a50"/><stop offset="0.6" stop-color="#7a1e48"/><stop offset="1" stop-color="#6a1040"/></linearGradient><linearGradient id="gh" x1="0" y1="0" x2="1" y2="0.4"><stop offset="0" stop-color="#cf8a80"/><stop offset="0.35" stop-color="#c2646a"/><stop offset="1" stop-color="#9a2c50"/></linearGradient><linearGradient id="gbl" x1="0" y1="0" x2="0" y2="1"><stop offset="0" stop-color="#7a4458"/><stop offset="0.4" stop-color="#a88a7a"/><stop offset="1" stop-color="#b89c84"/></linearGradient><clipPath id="cb"><path d="M827.5,163.5 C831,170 835,177.5 840,185.4 C848,188.4 858,190.2 866,189.2 C873,187.4 878,184.4 882,182 C888,177.4 893,174.8 898,174.2 C905,173.2 912,172.6 918,172.6 C926,171.2 932,170.2 937,168.6 C945,166.4 952,164 958,160.6 C953,167 947,172 941,175.5 C935,178 929,179.6 925,180.6 C922,182 920,184 919.6,186 C921,192 921.6,198 921,202.5 C919.6,212 917.4,220 915.6,225 C912,223 910,221 908,219.4 C904,216 899,212.4 895,211.9 C890,213 886,217 882,221.2 C879,225 876,228.5 872.5,230.6 C869,232.5 865,233.2 861,233.5 C853,234.6 845,234.2 838.8,232.5 C835,229.5 832.5,225 831,221 C827,212 824,204 822.5,196 C820,190 818,184 816,177 Z"/></clipPath></defs><g filter="url(#bb)"><path d="M824,205 C822,210 822,216 824,222 L830,226 L829,206 Z" fill="#3a1a44"/><path d="M823,213 C822,217 822,220 822.5,222.5 C819,230 815,238 811.2,245 C808,250 804,254.6 801.2,257.5 C795,260.4 788,262.6 781.9,264.4 C783,266.6 784.6,268.2 786.2,269.4 C789.6,270.6 793,271.6 796.2,271.9 C800.4,269.4 804.4,265.8 807.5,262.5 C808.4,260.6 808.8,258.4 808.8,256.2 C812.4,251.4 816.4,246 820,241.2 C824.6,238.2 829,234.6 833.5,231.2 L834,224 Z" fill="url(#gl)"/><path d="M851.2,233 C849,239 846.4,245.6 843.8,251.2 C840,256 836,260.6 832.5,265 C828.6,270.4 824.2,276.4 820,281.9 C822,283 824,283.6 826.2,283.8 C829.8,283.4 833.2,282.6 836.2,281.2 C838,276.4 839.6,271.6 840.6,266.9 C840.6,265.4 840.4,264 840,262.5 C843.4,257.6 846.8,252.4 850,247.5 C854.6,243.2 859,238.8 863.4,233.6 Z" fill="url(#gl)"/><path d="M838,186 Q840.0,179.5 844.4,173 Q844.3,180.1 844.6,186.6 Z M850,188.2 Q852.6,183.8 857.6,179.4 Q856.3,184.4 855.4,188.79999999999998 Z M859.2,189.6 Q861.2,185.4 865.6,181.2 Q864.4,186.0 863.6,190.2 Z M869.4,188 Q869.9,183.3 872.8,178.6 Q872.7,183.9 873,188.6 Z M878.4,183.4 Q878.8,178.4 881.6,173.4 Q881.7,179.0 882.2,184.0 Z M885.4,179.6 Q885.8,174.5 888.6,169.4 Q888.6,175.1 889,180.2 Z M891.6,176.8 Q891.8,173.2 894.4,169.6 Q894.4,173.8 894.8,177.4 Z M932,169.6 Q934.1,166.6 938.6,163.6 Q937.6,167.2 937,170.2 Z " fill="#9a5058"/><path d="M827.5,163.5 C831,170 835,177.5 840,185.4 C848,188.4 858,190.2 866,189.2 C873,187.4 878,184.4 882,182 C888,177.4 893,174.8 898,174.2 C905,173.2 912,172.6 918,172.6 C926,171.2 932,170.2 937,168.6 C945,166.4 952,164 958,160.6 C953,167 947,172 941,175.5 C935,178 929,179.6 925,180.6 C922,182 920,184 919.6,186 C921,192 921.6,198 921,202.5 C919.6,212 917.4,220 915.6,225 C912,223 910,221 908,219.4 C904,216 899,212.4 895,211.9 C890,213 886,217 882,221.2 C879,225 876,228.5 872.5,230.6 C869,232.5 865,233.2 861,233.5 C853,234.6 845,234.2 838.8,232.5 C835,229.5 832.5,225 831,221 C827,212 824,204 822.5,196 C820,190 818,184 816,177 Z" fill="url(#gb)"/><g clip-path="url(#cb)"><path d="M815,176 C818,186 821,196 824,206 C826,214 830,224 836,231 L826,232 L812,180 Z" fill="#8c2a4c" opacity="0.8"/><path d="M815,176 L829,166 C831,172 830,180 826,186 C822,184 818,180 815,176 Z" fill="#741c46" opacity="0.85"/><path d="M861.2,212 C868,210.4 875,208 882,206.2 C887,206.6 891,208.4 895,211.9 C890,213 886,217 882,221.2 C879,225 876,228.5 872.5,230.6 C869,232.5 865,233.2 861.2,233.4 C859.6,230.6 858.6,228 858.4,225 C858.6,220 859.6,215.6 861.2,212 Z" fill="url(#gbl)"/><path d="M858,206 C866,205 876,203 884,201 L895,209 C886,207 874,210 861,213.4 Z" fill="#6a3450" opacity="0.85"/><path d="M883,180.6 L889,178.2 C890.4,186 890.6,195 889.4,203.6 L884.4,205.2 C885.6,197 885,188.4 883,180.6 Z" fill="#59a26c"/><path d="M893.4,175.4 L900,174.4 C900.6,184 899.4,193 898.2,201.6 L893.2,201 C894.4,192.4 894.4,183.6 893.4,175.4 Z" fill="#59a26c"/><path d="M902.8,173.8 L909.4,173.4 C909.6,186 907,197.6 903.6,208.4 L898,206.4 C901,196 902.8,185 902.8,173.8 Z" fill="#59a26c"/><path d="M912.8,173.2 L920,174.4 C920,184 917,198 909,213.4 L903.4,211.6 C909,200 912.6,187 912.8,173.2 Z" fill="#59a26c"/><path d="M918,191.6 L920.4,194.6 C919.6,202 916.6,208.6 912.4,214 L909,212.6 C913.6,206.4 916.8,199.4 918,191.6 Z" fill="#59a26c"/><path d="M925.4,171.6 L930.6,170.8 L928.4,178.6 L923.4,180 Z" fill="#59a26c"/><path d="M934.4,168.6 L938.6,167.4 L937.4,173 L933.4,174.4 Z" fill="#59a26c"/><path d="M943,166 L946,165 L945,169.6 L942.4,170.8 Z" fill="#59a26c"/><path d="M873,188.4 L878.4,186.4 C880.6,194 882.4,203 882.2,211 L878,211.4 C877.6,203 875.6,195.4 873,188.4 Z" fill="#59a26c"/><path d="M862.6,190.4 L868.8,190 C871,196 872.2,202.6 872,209 L867.4,207 C867,201 865,195.4 862.6,190.4 Z" fill="#59a26c"/><path d="M844.6,194.6 L850.6,191.6 C852.6,198 855,203 858.2,206 C860,207.6 862,208.8 864,209.6 L860.4,213.2 C856,211.6 852,209.4 848.8,206.8 C846.8,203 845.2,199 844.6,194.6 Z" fill="#59a26c"/><path d="M836.8,208.6 L842.8,205.4 C846.4,210.2 851.4,214 857.4,216 L856.4,219.2 C850,219.6 843.6,219.2 838,218.2 Z" fill="#59a26c"/><path d="M839.6,222.2 C846,223 852,223.2 858,223.6 L858,227.6 C852,227.8 846.2,227.8 841,227.4 Z" fill="#59a26c"/><path d="M848,229.4 L860.8,230 L860.8,233 L849.6,232.8 Z" fill="#59a26c"/><path d="M825.4,168 L830.8,170 C831.2,174 830.6,177.6 829.8,180.4 L826,182 C826.6,177.4 826.4,172.4 825.4,168 Z" fill="#59a26c"/><path d="M832.6,180.6 L837.6,183.6 C837,189 836,194.4 834.6,199.2 L831.6,201.6 C832.6,195 833,187.6 832.6,180.6 Z" fill="#59a26c"/><path d="M837.8,195.2 L841.2,198 C840,203 838.4,208 836.2,212.2 L833.4,213.4 C835.4,208 837,201.6 837.8,195.2 Z" fill="#59a26c"/><path d="M896,206 C904,212 910,218 916,226 L922,200 Z" fill="#8a3a50" opacity="0.35"/></g><path d="M918.6,197 C921.6,200.6 925,203.4 928,204.4 C930.6,203.6 933,203.2 934.6,204 C936.8,205.4 937.2,208 936,210.8 C934.6,213.8 932,216.8 930,219.8 L925,219.8 C923,222 920,224 915.6,225 C913,224 911,222 909,219.5 C911,212 914,203.6 918.6,197 Z" fill="#9e3e56"/><path d="M919,200 C921,203 923.6,206 926.4,208 C925,211 923,213.6 921,215.6 C919.6,211 919,205 919,200 Z" fill="#6a1c46" opacity="0.8"/><path d="M924.6,216.4 C927,217 929,218 930.8,219 C934.2,220.6 937.6,222.4 939.2,224.6 C940,228 939.6,231.4 938.2,234.2 C936.8,237.2 935.2,239.8 933.4,242 C930.6,238.6 928.4,235.2 926.8,231.8 C924.8,228.8 923.8,225.4 923.8,222 Z" fill="#6e1242"/><path d="M780.8,160 C782,156 786,154.4 790,153.4 L812,150 C820,152 826,158 828,164 C828.6,170 823,177 816,178.4 C808,178.6 800,176.2 795,174 C790,172.6 786.6,170.4 785.2,168.6 C782,167 780.4,164 780.8,160 Z" fill="url(#gh)"/><path d="M812,151 C821,153 826.6,159 828,165 C828.4,171 823,177 816,178.4 C811,178.4 806,177.4 802,176.2 C808,172 812,163 812,151 Z" fill="#92284e" opacity="0.8"/><path d="M789.2,154 C792.4,148 798.6,144.4 804,144.8 C811,146 816,149.6 821,148.6 C827,147 831,143 834.6,140.4 C837.2,141 838.8,143.4 838.2,146 C836,152 831,157.4 826.6,162 C822,156.4 812,152.6 800,153.2 Z" fill="url(#gc)"/><path d="M783.4,155.2 C781.6,150 782.8,144 786.2,138.8 C785.4,145 786,150.6 788.6,154 Z" fill="#a4605a"/><path d="M793,148.6 C793.4,145.2 795,143 797,141.4 C796.4,144 796.4,146 797.2,147.6 Z" fill="#8c3048"/><ellipse cx="803.8" cy="161" rx="3.7" ry="3.2" fill="#c8a0a2" opacity="0.75"/><ellipse cx="803.9" cy="161.1" rx="2.4" ry="2.1" fill="#1a0e1e"/><circle cx="803.4" cy="160.6" r="0.55" fill="#fff"/><ellipse cx="781.6" cy="161.6" rx="1.2" ry="2.1" fill="#24101c"/><path d="M783.6,165.8 Q785.4,168.6 787.8,169.6" stroke="#2a1220" stroke-width="1.1" fill="none" stroke-linecap="round"/></g></svg></div><div style="left:1015.6px;top:69.5px;width:6.4px;height:509.5px;background:#030303"></div><div style="left:1016.4px;top:69.5px;width:5px;height:341px;background:linear-gradient(90deg,#565656,#6e6e6e 50%,#5c5c5c);box-shadow:0 0 0 0.6px #3c3c3c"></div><div style="left:1018.6px;top:582px;width:2.8px;height:2.6px;background:#8c8c8c"></div><div class="t" style="transform:scaleX(0.775);left:744px;top:346.2px;font-size:8px;color:#f6f6f6;text-shadow:0 0 0.6px #fffa">MODELS/PLANETS/CREATURES/ANTELOPERIG/ANTELOPE.SCENE.MBIN</div><div class="btn" style="left:739.4px;top:358.6px;width:190px;height:11.4px"><div class="t" style="transform:scaleX(0.84);color:#bd9a26;left:4.6px;text-shadow:0 0 0.6px #6a5a10">View Variants</div></div><div style="left:741px;top:380px;width:271px;height:1.2px;background:#8d8d8d"></div><svg width="1024" height="640" viewBox="0 0 1024 640" style="left:0;top:0"><path d="M742.6,386.8 h4.6 l-2.3,4.2 Z" fill="#f0f0f0"/><path d="M742.8,398.6 v4.6 l4.2,-2.3 Z" fill="#f0f0f0"/><path d="M801.6,364.4 V373.2 L803.7,371.3 L805.2,374.6 L806.7,373.9 L805.2,370.7 L808,370.5 Z" fill="#fbfbfb" stroke="#333" stroke-width="0.5"/></svg><div class="t" style="transform:scaleX(0.84);left:750.4px;top:384.2px;font-size:7.8px">cTkAnimPoseComponentData</div><div class="t" style="transform:scaleX(0.84);left:750.4px;top:396px;font-size:7.8px">cTkAnimationComponentData</div><div class="btn" style="left:739.4px;top:407.6px;width:274px;height:11.4px"><div class="t" style="transform:scaleX(0.78);left:4.6px">IDLE</div></div><div class="btn" style="left:739.4px;top:423.1px;width:274px;height:11.4px"><div class="t" style="transform:scaleX(0.78);left:4.6px">SKID</div></div><div class="btn" style="left:739.4px;top:438.6px;width:274px;height:11.4px"><div class="t" style="transform:scaleX(0.78);left:4.6px">RIGHT</div></div><div class="btn" style="left:739.4px;top:454.1px;width:274px;height:11.4px"><div class="t" style="transform:scaleX(0.78);left:4.6px">LEFT</div></div><div class="btn" style="left:739.4px;top:469.6px;width:274px;height:11.4px"><div class="t" style="transform:scaleX(0.78);left:4.6px">EARS</div></div><div class="btn" style="left:739.4px;top:485.1px;width:274px;height:11.4px"><div class="t" style="transform:scaleX(0.78);left:4.6px">EAT</div></div><div class="btn" style="left:739.4px;top:500.6px;width:274px;height:11.4px"><div class="t" style="transform:scaleX(0.78);left:4.6px">LOOKLEFT</div></div><div class="btn" style="left:739.4px;top:516.1px;width:274px;height:11.4px"><div class="t" style="transform:scaleX(0.78);left:4.6px">LOOKRIGHT</div></div><div class="btn" style="left:739.4px;top:531.6px;width:274px;height:11.4px"><div class="t" style="transform:scaleX(0.78);left:4.6px">WALK</div></div><div class="btn" style="left:739.4px;top:547.1px;width:274px;height:11.4px"><div class="t" style="transform:scaleX(0.78);left:4.6px">RUN</div></div><div class="t" style="transform:scaleX(0.78);left:748.2px;top:562.4px;font-size:8px">FRAME 18</div><div style="left:737px;top:572px;width:278px;height:8px;overflow:hidden"><div class="t" style="transform:scaleX(0.78);left:11.2px;top:3.2px;font-size:8px">SPEED</div><div style="left:113px;top:1.8px;width:164px;height:8px;background:#3f3f3f"></div><div class="t" style="transform:scaleX(0.84);left:126px;top:3.4px;font-size:7.6px">1.00000</div></div><svg width="1024" height="640" viewBox="0 0 1024 640" style="left:0;top:0"><path d="M856,577.6 L852.4,579.6 H856 Z" fill="#f4f4f4"/><path d="M1007.4,576.2 L1012,578.6 L1007.4,580 Z" fill="#f4f4f4"/></svg>
</body></html>
